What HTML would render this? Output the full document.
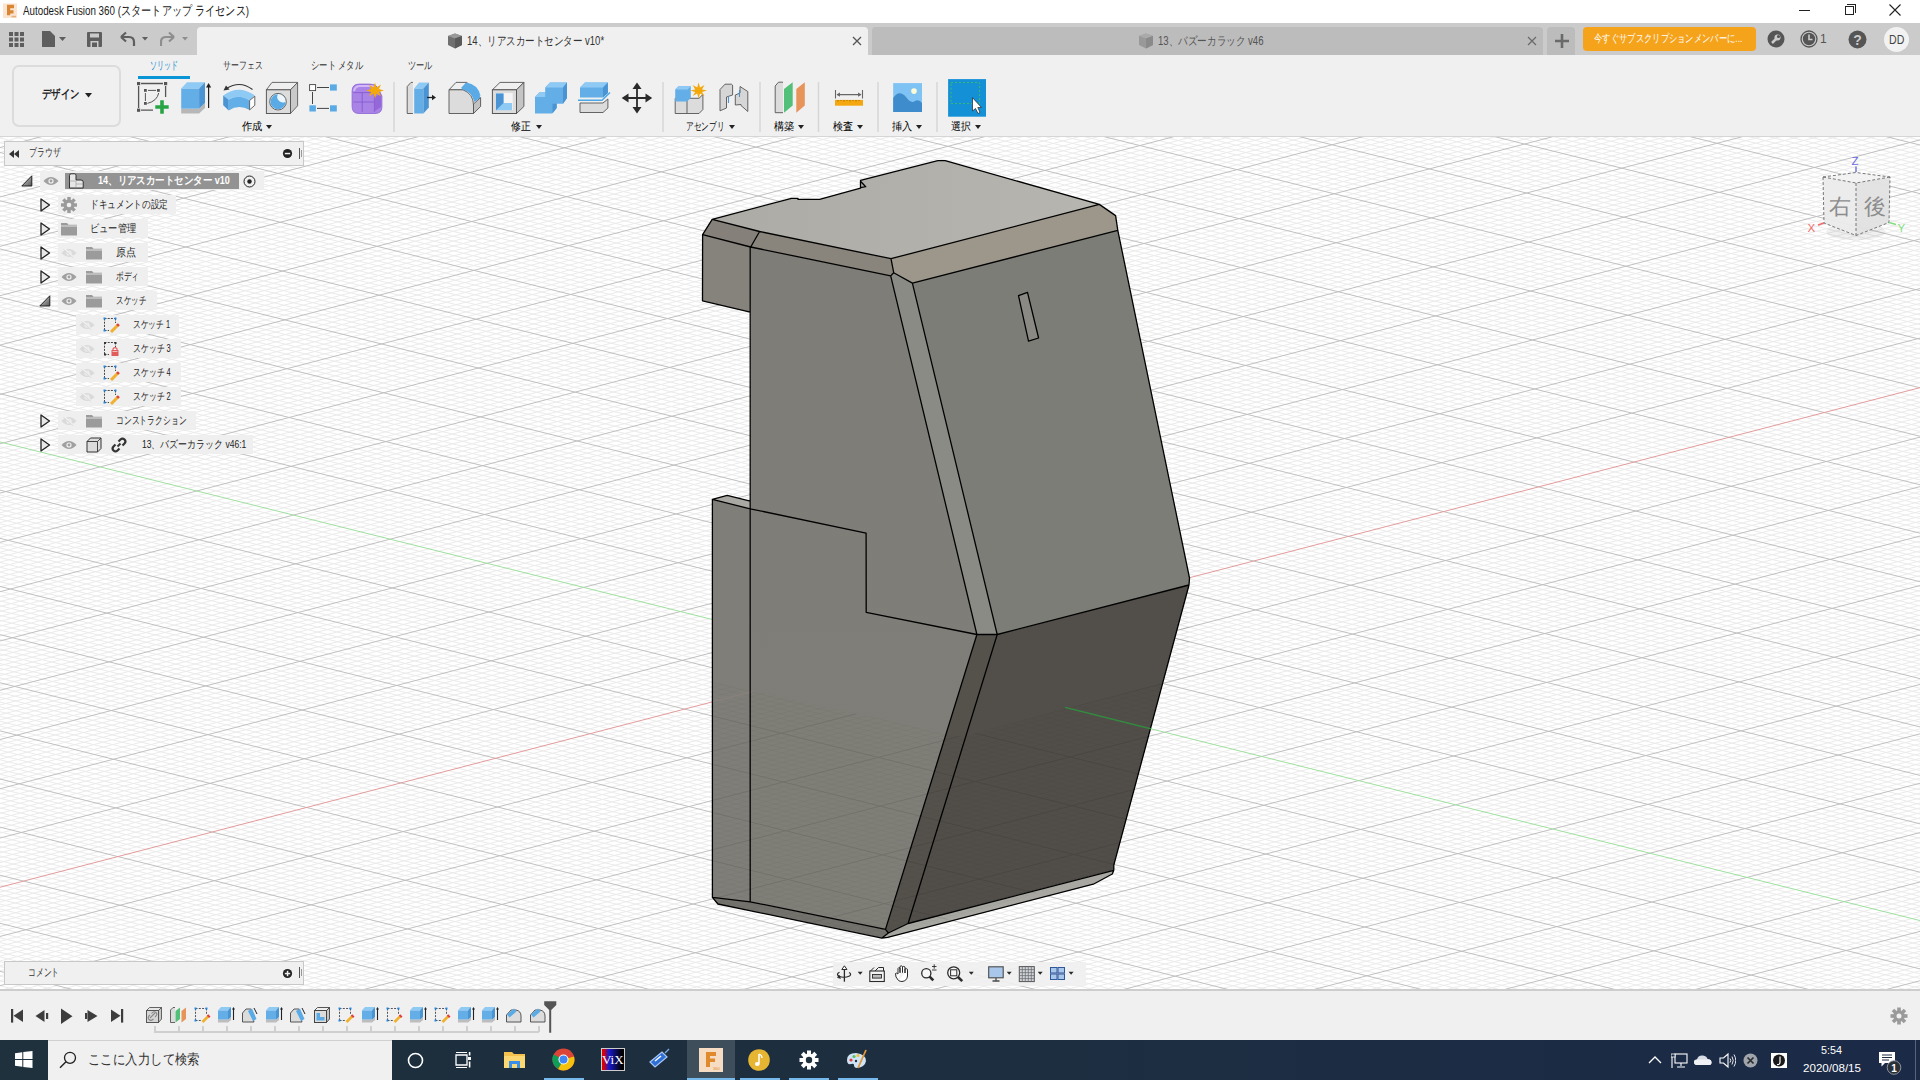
<!DOCTYPE html>
<html lang="ja">
<head>
<meta charset="utf-8">
<style>
*{margin:0;padding:0;box-sizing:border-box}
html,body{width:1920px;height:1080px;overflow:hidden;background:#fff;font-family:"Liberation Sans",sans-serif;color:#222}
.a{position:absolute}
.t{position:absolute;white-space:nowrap;line-height:1}
svg{display:block}
</style>
</head>
<body>
<!-- title bar -->
<div class="a" style="left:0;top:0;width:1920px;height:23px;background:#fff"></div>
<svg class="a" style="left:3px;top:3px" width="15" height="15" viewBox="0 0 15 15"><rect x="0" y="0.5" width="14" height="14.5" fill="#fbe4d0"/><path d="M4 1.8H11V5.2H7.2V7.3H10.5V10.5H7.2V12.2H4Z" fill="#d98634"/><rect x="8.5" y="12.8" width="4.5" height="1.5" fill="#e6b07a"/></svg>
<div class="t" style="left:23.0px;top:5px;font-size:12.5px;color:#1a1a1a;transform:scaleX(0.783);transform-origin:0 0">Autodesk Fusion 360 (スタートアップ ライセンス)</div>
<!-- window controls -->
<div class="a" style="left:1799px;top:10px;width:11px;height:1px;background:#222"></div>
<div class="a" style="left:1845px;top:6px;width:9px;height:9px;border:1px solid #222;background:#fff"></div>
<div class="a" style="left:1847px;top:4px;width:9px;height:9px;border-top:1px solid #222;border-right:1px solid #222"></div>
<svg class="a" style="left:1889px;top:4px" width="12" height="12"><path d="M0.5 0.5L11.5 11.5M11.5 0.5L0.5 11.5" stroke="#222" stroke-width="1.1"/></svg>

<!-- tab bar -->
<div class="a" style="left:0;top:23px;width:1920px;height:32px;background:#cbcbcb"></div>
<!-- left app buttons -->
<svg class="a" style="left:9px;top:32px" width="15" height="15"><g fill="#5e5e5e"><rect x="0" y="0" width="4" height="4"/><rect x="5.5" y="0" width="4" height="4"/><rect x="11" y="0" width="4" height="4"/><rect x="0" y="5.5" width="4" height="4"/><rect x="5.5" y="5.5" width="4" height="4"/><rect x="11" y="5.5" width="4" height="4"/><rect x="0" y="11" width="4" height="4"/><rect x="5.5" y="11" width="4" height="4"/><rect x="11" y="11" width="4" height="4"/></g></svg>
<svg class="a" style="left:42px;top:31px" width="28" height="17"><path d="M0 0 H8 L13 5 V16 H0 Z" fill="#5e5e5e"/><path d="M17 6 H24 L20.5 10 Z" fill="#5e5e5e"/></svg>
<svg class="a" style="left:87px;top:32px" width="15" height="15"><path d="M0 1 Q0 0 1 0 H14 Q15 0 15 1 V14 Q15 15 14 15 H1 Q0 15 0 14 Z" fill="#5e5e5e"/><rect x="3" y="1.5" width="9" height="4" fill="#cbcbcb"/><rect x="3.5" y="9" width="8" height="6" fill="#cbcbcb"/><rect x="5" y="10.5" width="5" height="4.5" fill="#5e5e5e"/></svg>
<svg class="a" style="left:118px;top:31px" width="34" height="17"><path d="M3 6 L8 1.5 M3 6 L8 10.5 M3 6 H11 Q16 6 16 11 V15" stroke="#5e5e5e" stroke-width="2.2" fill="none"/><path d="M24 6 H30 L27 9.5 Z" fill="#5e5e5e"/></svg>
<svg class="a" style="left:160px;top:31px" width="34" height="17"><path d="M14 6 L9 1.5 M14 6 L9 10.5 M14 6 H6 Q1 6 1 11 V15" stroke="#8e8e8e" stroke-width="2.2" fill="none"/><path d="M22 6 H28 L25 9.5 Z" fill="#8e8e8e"/></svg>

<!-- active tab -->
<div class="a" style="left:197px;top:27px;width:671px;height:28px;background:#f0f0f0;border-radius:4px 4px 0 0"></div>
<svg class="a" style="left:447px;top:33px" width="16" height="16"><path d="M1 3 L8 0.5 L15 3 V12 L8 15.5 L1 12 Z" fill="#707070"/><path d="M1 3 L8 5.5 L15 3 L8 0.5Z" fill="#9a9a9a"/><path d="M8 5.5 V15.5 L15 12 V3 Z" fill="#5a5a5a"/></svg>
<div class="t" style="left:467.2px;top:35px;font-size:12px;color:#333;transform:scaleX(0.794);transform-origin:0 0">14、リアスカートセンター v10*</div>
<svg class="a" style="left:852px;top:36px" width="10" height="10"><path d="M1 1L9 9M9 1L1 9" stroke="#555" stroke-width="1.3"/></svg>
<!-- inactive tab -->
<div class="a" style="left:872px;top:27px;width:671px;height:28px;background:#bcbcbc;border-radius:4px 4px 0 0"></div>
<svg class="a" style="left:1138px;top:33px" width="16" height="16"><path d="M1 3 L8 0.5 L15 3 V12 L8 15.5 L1 12 Z" fill="#999"/><path d="M1 3 L8 5.5 L15 3 L8 0.5Z" fill="#aaa"/><path d="M8 5.5 V15.5 L15 12 V3 Z" fill="#8a8a8a"/></svg>
<div class="t" style="left:1158.0px;top:35px;font-size:12px;color:#555;transform:scaleX(0.799);transform-origin:0 0">13、バズーカラック v46</div>
<svg class="a" style="left:1527px;top:36px" width="10" height="10"><path d="M1 1L9 9M9 1L1 9" stroke="#6a6a6a" stroke-width="1.2"/></svg>
<!-- plus tab -->
<div class="a" style="left:1547px;top:27px;width:28px;height:28px;background:#bcbcbc;border-radius:4px 4px 0 0"></div>
<svg class="a" style="left:1555px;top:34px" width="14" height="14"><path d="M7 0V14M0 7H14" stroke="#6a6a6a" stroke-width="2.6"/></svg>
<!-- orange button -->
<div class="a" style="left:1583px;top:27px;width:173px;height:24px;background:#f6a31c;border-radius:4px"></div>
<div class="t" style="left:1594.0px;top:33px;font-size:11px;color:#fff;transform:scaleX(0.756);transform-origin:0 0">今すぐサブスクリプションメンバーに...</div>
<!-- right icons -->
<svg class="a" style="left:1766px;top:29px" width="20" height="20"><circle cx="10" cy="10" r="8.5" fill="#555"/><path d="M6 14 L10 10" stroke="#cbcbcb" stroke-width="2.5"/><circle cx="11.5" cy="8.5" r="3" fill="#cbcbcb"/><circle cx="12.5" cy="7.5" r="1.6" fill="#555"/></svg>
<svg class="a" style="left:1799px;top:29px" width="20" height="20"><circle cx="10" cy="10" r="8" fill="none" stroke="#555" stroke-width="1.3"/><circle cx="10" cy="10" r="6.2" fill="#555"/><path d="M10 5.5 V10.5 H13.5" stroke="#cbcbcb" stroke-width="1.6" fill="none"/></svg>
<div class="t" style="left:1820px;top:33px;font-size:12px;color:#555">1</div>
<svg class="a" style="left:1848px;top:30px" width="19" height="19"><circle cx="9.5" cy="9.5" r="9" fill="#555"/><text x="9.5" y="14.5" text-anchor="middle" font-size="14" font-weight="bold" fill="#cbcbcb" font-family="Liberation Sans">?</text></svg>
<div class="a" style="left:1884px;top:27px;width:25px;height:25px;border-radius:50%;background:#f2f2f2"></div>
<div class="t" style="left:1889.4px;top:34px;font-size:12.5px;color:#444;transform:scaleX(0.847);transform-origin:0 0">DD</div>

<!-- toolbar -->
<div class="a" style="left:0;top:55px;width:1920px;height:82px;background:#f0f0f0;border-bottom:1px solid #d6d6d6"></div>
<div class="a" style="left:12px;top:65px;width:109px;height:62px;border:2px solid #dcdcdc;border-radius:7px"></div>
<div class="t" style="left:41.7px;top:89px;font-size:11.5px;font-weight:bold;color:#222;transform:scaleX(0.781);transform-origin:0 0">デザイン</div>
<svg class="a" style="left:85px;top:93px" width="7" height="5"><path d="M0 0H7L3.5 4.5Z" fill="#222"/></svg>
<div class="t" style="left:149.5px;top:60px;font-size:10.5px;color:#0b86cc;transform:scaleX(0.639);transform-origin:0 0">ソリッド</div>
<div class="a" style="left:138px;top:76px;width:52px;height:3px;background:#0a96d6"></div>
<div class="t" style="left:222.8px;top:60px;font-size:10.5px;color:#333;transform:scaleX(0.716);transform-origin:0 0">サーフェス</div>
<div class="t" style="left:310.7px;top:60px;font-size:10.5px;color:#333;transform:scaleX(0.756);transform-origin:0 0">シート メタル</div>
<div class="t" style="left:408.4px;top:60px;font-size:10.5px;color:#333;transform:scaleX(0.745);transform-origin:0 0">ツール</div>

<svg class="a" style="left:0;top:55px" width="1000" height="81" viewBox="0 55 1000 81">
<g stroke="#d6d6d6" stroke-width="1.5">
<path d="M394 82V132M663 82V132M760 82V132M818.5 82V132M878 82V132M937 82V132"/>
</g>
<!-- sketch -->
<g>
<path d="M141 83.5H163M138.6 86V108M141 110.2H153M165.6 86V97" stroke="#555" stroke-width="1.3" fill="none"/>
<rect x="137" y="82" width="3.2" height="3.2" fill="#555"/><rect x="164" y="82" width="3.2" height="3.2" fill="#555"/><rect x="137" y="108.6" width="3.2" height="3.2" fill="#555"/>
<rect x="144" y="89" width="2.8" height="2.8" fill="#555"/><rect x="157" y="89" width="2.8" height="2.8" fill="#555"/><rect x="144" y="102" width="2.8" height="2.8" fill="#555"/>
<path d="M148 90.4H156M145.4 93V101M147.5 103.4Q157 101 158.7 93" stroke="#555" stroke-width="1" fill="none"/>
<path d="M160.2 100.3H163.8V105.2H168.7V108.8H163.8V113.7H160.2V108.8H155.3V105.2H160.2Z" fill="#27a544"/>
</g>
<!-- extrude -->
<g>
<polygon points="181.2,108.6 199.1,108.6 205,103 205,108 199.1,113.5 181.2,113.5" fill="#b7b7b7"/>
<polygon points="181.2,88.4 199.1,88.4 199.1,108.6 181.2,108.6" fill="#64aee8"/>
<polygon points="181.2,88.4 187,82.2 205,82.2 199.1,88.4" fill="#8fcaf5"/>
<polygon points="199.1,88.4 205,82.2 205,103 199.1,108.6" fill="#4a94d4"/>
<path d="M208.6 108V86" stroke="#222" stroke-width="1.2"/><path d="M206 87.5L208.6 83L211.2 87.5Z" fill="#222"/>
</g>
<!-- revolve -->
<g>
<path d="M252.5 89.5Q240 80 226.5 88.5" stroke="#333" stroke-width="1.1" fill="none"/><path d="M223.5 90.5L226 85.5L229.5 89.5Z" fill="#333"/>
<path d="M223.2 95.6Q238.5 84 254.8 95.3L249.6 100.5Q238.5 93.5 228.7 99.8Z" fill="#8fcaf5"/>
<path d="M228.7 99.8Q238.5 93.5 249.6 100.5V109.9Q238.5 104 228.7 110.6Z" fill="#62aee8"/>
<path d="M223.2 95.6L228.7 99.8V110.6L223.2 105.3Z" fill="#4a94d4"/>
<path d="M249.6 100.5L254.8 96.2V105.3L249.6 109.9Z" fill="#fff" stroke="#555" stroke-width="0.9"/>
</g>
<!-- hole -->
<g>
<polygon points="266.4,89.8 272,82.4 297.6,82.4 290.5,89.8" fill="#efefef" stroke="#5a5a5a" stroke-width="0.9"/>
<polygon points="290.5,89.8 297.6,82.4 297.6,105.8 290.5,113.5" fill="#c9c9c9" stroke="#5a5a5a" stroke-width="0.9"/>
<rect x="266.4" y="89.8" width="24.1" height="23.7" fill="#dcdcdc" stroke="#5a5a5a" stroke-width="1"/>
<circle cx="278" cy="101.7" r="8.3" fill="#eef6fd" stroke="#555" stroke-width="0.9"/>
<path d="M278 94.2A7.5 7.5 0 1 0 285.5 101.7A5.5 5.5 0 0 1 278 94.2Z" fill="#5aaae6"/>
</g>
<!-- pattern -->
<g>
<rect x="309.6" y="84.6" width="6" height="6" fill="#fff" stroke="#444" stroke-width="0.9"/>
<rect x="330" y="84.4" width="6.8" height="6.2" fill="#5aaae6"/>
<rect x="309.4" y="105.3" width="6.5" height="6.2" fill="#5aaae6"/>
<rect x="330" y="105.3" width="6.8" height="6.2" fill="#5aaae6"/>
<path d="M317 87.5H329M317 108.4H329M312.5 92V104" stroke="#444" stroke-width="1"/>
</g>
<!-- form -->
<g>
<path d="M359 84.1H370Q376 84.1 378 88L381.9 96V107Q381.9 113.5 375 113.5H359Q352.1 113.5 352.1 106.5V91Q352.1 84.1 359 84.1Z" fill="#a983e6" stroke="#8c62d4" stroke-width="0.8"/>
<path d="M354 91Q355 86 360 86H371Q375 86 377 90" stroke="#d2b8fb" stroke-width="2.2" fill="none"/>
<path d="M353.4 92.6H374.4V111.9M362.2 92.6V111.9M353.4 102H374.4" stroke="#8358cc" stroke-width="0.8" fill="none"/>
<path d="M375 96.6L381 94V107L375 111Z" fill="#9468d8"/>
<polygon points="375,82.5 376.5,87.5 381,84.5 379,89 384,90.5 379,92 381,96.5 376.5,93.5 375,98.5 373.5,93.5 369,96.5 371,92 366,90.5 371,89 369,84.5 373.5,87.5" fill="#f3a80c"/>
</g>
<!-- press pull -->
<g>
<path d="M412.9 82.4H411L407.2 86.5V113.5H412.9" fill="#dcdcdc" stroke="#555" stroke-width="0.9"/>
<polygon points="414.2,88.4 423.4,88.4 423.4,113.5 414.2,113.5" fill="#64aee8"/>
<polygon points="414.2,88.4 419,82.4 428.8,82.4 423.4,88.4" fill="#8fcaf5"/>
<polygon points="423.4,88.4 428.8,82.4 428.8,107.5 423.4,113.5" fill="#4a94d4"/>
<path d="M427 97.5H433" stroke="#222" stroke-width="1.3"/><path d="M432 94.8L436 97.5L432 100.2Z" fill="#222"/>
</g>
<!-- fillet -->
<g>
<path d="M449 89.8L456 82.4H467L473.5 89.8Z" fill="#efefef" stroke="#555" stroke-width="0.9"/>
<path d="M449 89.8H463Q473.5 94 473.5 105V113.5H449Z" fill="#dcdcdc" stroke="#555" stroke-width="0.9"/>
<path d="M473.5 104L480.6 97.5V106.5L473.5 113.5Z" fill="#c2c2c2" stroke="#555" stroke-width="0.9"/>
<path d="M461.5 88Q478 86 480.5 97.5L474.5 102Q472 92 462.5 89.5Z" fill="#5aaae6"/>
<path d="M461 88L466 82.4Q478 84 480.6 96" fill="#5aaae6"/>
</g>
<!-- shell -->
<g>
<polygon points="492.4,89.8 500,82.4 523.9,82.4 516.5,89.8" fill="#efefef" stroke="#555" stroke-width="0.9"/>
<polygon points="516.5,89.8 523.9,82.4 523.9,106.5 516.5,113.5" fill="#c4c4c4" stroke="#555" stroke-width="0.9"/>
<rect x="492.4" y="89.8" width="24.1" height="23.7" fill="#dcdcdc" stroke="#555" stroke-width="1"/>
<rect x="496" y="93" width="16.7" height="17" fill="#f4f4f4"/>
<path d="M496 93.5H503.5V103H512V110.3H496Z" fill="#8fcaf5"/>
<path d="M496 93.5H503.5V103L496 110.3Z" fill="#4a94d4"/>
</g>
<!-- combine -->
<g>
<polygon points="545.2,87.5 550,82.4 567,82.4 567,98 563,103.7 545.2,103.7" fill="#64aee8"/>
<polygon points="545.2,87.5 550,82.4 567,82.4 563,87.5" fill="#8fcaf5"/>
<polygon points="563,87.5 567,82.4 567,98 563,103.7" fill="#4a94d4"/>
<polygon points="535,97 539.5,92.2 556.7,92.2 556.7,108 552,113.5 535,113.5" fill="#64aee8"/>
<polygon points="535,97 539.5,92.2 545.2,92.2 545.2,97" fill="#8fcaf5"/>
<polygon points="552.5,103.7 556.7,103.7 556.7,108 552.5,113.5" fill="#4a94d4"/>
</g>
<!-- split -->
<g>
<polygon points="580,87.5 585,82.4 607.9,82.4 607.9,93 603,97.6 580,97.6" fill="#64aee8"/>
<polygon points="580,87.5 585,82.4 607.9,82.4 603,87.5" fill="#8fcaf5"/>
<polygon points="603,87.5 607.9,82.4 607.9,93 603,97.6" fill="#4a94d4"/>
<path d="M578 100.3H602L610 92.5" stroke="#4aa8e6" stroke-width="1.4" fill="none"/>
<polygon points="580,103 603,103 607.9,99 607.9,108 603,112.5 580,112.5" fill="#dcdcdc" stroke="#555" stroke-width="0.9"/>
</g>
<!-- move -->
<g fill="#2a2a2a">
<path d="M637 84V112M623 98H651" stroke="#2a2a2a" stroke-width="1.8"/>
<polygon points="637,82.4 641.5,89 632.5,89"/><polygon points="637,113.5 641.5,107 632.5,107"/>
<polygon points="621.7,98 628.5,93.5 628.5,102.5"/><polygon points="652.2,98 645.5,93.5 645.5,102.5"/>
</g>
<!-- new component -->
<g>
<polygon points="675.2,98.3 699,98.3 702.9,94.5 702.9,109.5 699,113.5 675.2,113.5" fill="#dcdcdc" stroke="#555" stroke-width="0.9"/>
<path d="M687 98.3V113.5" stroke="#555" stroke-width="0.9"/>
<polygon points="675.2,89.5 678.5,86.2 690.8,86.2 690.8,98 687,101.4 675.2,101.4" fill="#64aee8"/>
<polygon points="675.2,89.5 678.5,86.2 690.8,86.2 687.5,89.5" fill="#8fcaf5"/>
<polygon points="698.6,82.5 700,87.5 704.5,85 702,89.5 707,90.5 702,92 704.5,96 700,93.5 698.6,98.5 697.2,93.5 692.7,96 695.2,92 690.2,90.5 695.2,89.5 692.7,85 697.2,87.5" fill="#f3a80c"/>
</g>
<!-- joint -->
<g fill="#d6d6d6" stroke="#555" stroke-width="0.9">
<path d="M720 89.5L725 84.2H731.5Q733 84.5 732.6 87V95L726.5 97V108L720 110.8Z"/>
<path d="M735.3 95L740 93V86.5L747.8 91.5V111.5L741 105.5V104.5L735.3 105Z"/>
<path d="M728.5 96.5V103M739.5 90V97" stroke="#4a94d4" stroke-width="1.1" fill="none"/>
</g>
<!-- plane -->
<g>
<path d="M783 82.2H778.5L775.2 86V112.7H783" fill="#dcdcdc" stroke="#555" stroke-width="0.9"/>
<polygon points="784,89 792.7,82.2 792.7,105.5 784,112.7" fill="#52c079"/>
<polygon points="796.3,89 804.8,82.2 804.8,105.5 796.3,112.7" fill="#e8935a"/>
</g>
<!-- measure -->
<g>
<rect x="835" y="99.9" width="28" height="5.8" fill="#f4a70e"/>
<path d="M838 100V101.5M841 100V101M844 100V101.5M847 100V101M850 100V101.5M853 100V101M856 100V101.5M859 100V101" stroke="#8a5a00" stroke-width="0.7"/>
<path d="M835.5 90V98.5M862.5 90V98.5M837 94.6H861" stroke="#666" stroke-width="1.1"/>
<path d="M836.5 94.6L840 92.5V96.7Z M861.5 94.6L858 92.5V96.7Z" fill="#666"/>
</g>
<!-- image -->
<g>
<rect x="893.2" y="83.1" width="28.8" height="28.8" fill="#7ec3f4"/>
<path d="M893.2 111.9V98Q899 89 906 97Q911 104 915 101Q919 99 922 103V111.9Z" fill="#3f8ccc"/>
<circle cx="914" cy="91.1" r="2.8" fill="#fffbd6"/>
</g>
<!-- select -->
<g>
<rect x="948.1" y="79.1" width="37.9" height="37.6" fill="#1390d6"/>
<rect x="951" y="82.6" width="28.6" height="21" fill="none" stroke="#3fbf6a" stroke-width="0.9" stroke-dasharray="2.2,1.8"/>
<path d="M972.5 97.7V111L975.5 108.5L978 113.5L980 112.5L977.8 107.5L981.5 107.5Z" fill="#fff" stroke="#222" stroke-width="0.7"/>
</g>
</svg>
<div class="t" style="left:241.8px;top:121px;font-size:10.5px;color:#000;transform:scaleX(0.927);transform-origin:0 0">作成</div>
<svg class="a" style="left:266px;top:125px" width="6" height="4"><path d="M0 0H6L3 4Z" fill="#222"/></svg>
<div class="t" style="left:511.0px;top:121px;font-size:10.5px;color:#000;transform:scaleX(0.895);transform-origin:0 0">修正</div>
<svg class="a" style="left:536px;top:125px" width="6" height="4"><path d="M0 0H6L3 4Z" fill="#222"/></svg>
<div class="t" style="left:686.2px;top:121px;font-size:10.5px;color:#000;transform:scaleX(0.698);transform-origin:0 0">アセンブリ</div>
<svg class="a" style="left:729px;top:125px" width="6" height="4"><path d="M0 0H6L3 4Z" fill="#222"/></svg>
<div class="t" style="left:774.2px;top:121px;font-size:10.5px;color:#000;transform:scaleX(0.927);transform-origin:0 0">構築</div>
<svg class="a" style="left:798px;top:125px" width="6" height="4"><path d="M0 0H6L3 4Z" fill="#222"/></svg>
<div class="t" style="left:833.0px;top:121px;font-size:10.5px;color:#000;transform:scaleX(0.923);transform-origin:0 0">検査</div>
<svg class="a" style="left:857px;top:125px" width="6" height="4"><path d="M0 0H6L3 4Z" fill="#222"/></svg>
<div class="t" style="left:891.9px;top:121px;font-size:10.5px;color:#000;transform:scaleX(0.923);transform-origin:0 0">挿入</div>
<svg class="a" style="left:916px;top:125px" width="6" height="4"><path d="M0 0H6L3 4Z" fill="#222"/></svg>
<div class="t" style="left:950.8px;top:121px;font-size:10.5px;color:#000;transform:scaleX(0.905);transform-origin:0 0">選択</div>
<svg class="a" style="left:975px;top:125px" width="6" height="4"><path d="M0 0H6L3 4Z" fill="#222"/></svg>


<!-- viewport -->
<svg width="1920" height="853" viewBox="0 137 1920 853" style="position:absolute;left:0;top:137px">
<defs>
<linearGradient id="gtop" x1="0" y1="0" x2="1" y2="0"><stop offset="0" stop-color="#acaba5"/><stop offset="1" stop-color="#b6b5b0"/></linearGradient>
<linearGradient id="gleft" x1="0" y1="0" x2="0" y2="1"><stop offset="0" stop-color="#7e7d77"/><stop offset="1" stop-color="#7f7e78"/></linearGradient>
</defs>
<rect x="0" y="137" width="1920" height="853" fill="#ffffff"/>
<path d="M3949.6 555.7L923.7 -194.2M3940.0 558.2L914.2 -191.7M3930.3 560.7L904.7 -189.2M3920.7 563.2L895.2 -186.7M3911.0 565.6L885.7 -184.2M3901.4 568.1L876.2 -181.7M3891.8 570.6L866.7 -179.2M3882.1 573.1L857.2 -176.7M3872.5 575.6L847.7 -174.2M3853.2 580.6L828.7 -169.2M3843.6 583.1L819.2 -166.7M3834.0 585.5L809.7 -164.2M3824.3 588.0L800.2 -161.7M3814.7 590.5L790.7 -159.2M3805.1 593.0L781.2 -156.7M3795.4 595.5L771.7 -154.2M3785.8 598.0L762.2 -151.7M3776.2 600.5L752.7 -149.2M3756.9 605.4L733.8 -144.3M3747.3 607.9L724.3 -141.8M3737.6 610.4L714.8 -139.3M3728.0 612.9L705.3 -136.8M3718.4 615.4L695.8 -134.3M3708.8 617.8L686.3 -131.8M3699.1 620.3L676.8 -129.3M3689.5 622.8L667.3 -126.8M3679.9 625.3L657.9 -124.3M3660.6 630.3L638.9 -119.3M3651.0 632.7L629.4 -116.8M3641.4 635.2L619.9 -114.3M3631.8 637.7L610.4 -111.8M3622.1 640.2L601.0 -109.3M3612.5 642.7L591.5 -106.9M3602.9 645.2L582.0 -104.4M3593.3 647.6L572.5 -101.9M3583.7 650.1L563.0 -99.4M3564.4 655.1L544.1 -94.4M3554.8 657.6L534.6 -91.9M3545.2 660.0L525.1 -89.4M3535.6 662.5L515.7 -86.9M3526.0 665.0L506.2 -84.4M3516.3 667.5L496.7 -81.9M3506.7 670.0L487.2 -79.5M3497.1 672.5L477.8 -77.0M3487.5 674.9L468.3 -74.5M3468.3 679.9L449.3 -69.5M3458.7 682.4L439.9 -67.0M3449.0 684.9L430.4 -64.5M3439.4 687.3L420.9 -62.0M3429.8 689.8L411.4 -59.5M3420.2 692.3L402.0 -57.0M3410.6 694.8L392.5 -54.6M3401.0 697.3L383.0 -52.1M3391.4 699.7L373.6 -49.6M3372.2 704.7L354.6 -44.6M3362.6 707.2L345.2 -42.1M3353.0 709.6L335.7 -39.6M3343.4 712.1L326.2 -37.1M3333.8 714.6L316.8 -34.6M3324.1 717.1L307.3 -32.2M3314.5 719.6L297.8 -29.7M3304.9 722.0L288.4 -27.2M3295.3 724.5L278.9 -24.7M3276.1 729.5L260.0 -19.7M3266.5 731.9L250.5 -17.2M3256.9 734.4L241.1 -14.7M3247.3 736.9L231.6 -12.3M3237.7 739.4L222.2 -9.8M3228.1 741.9L212.7 -7.3M3218.5 744.3L203.2 -4.8M3208.9 746.8L193.8 -2.3M3199.4 749.3L184.3 0.2M3180.2 754.2L165.4 5.1M3170.6 756.7L156.0 7.6M3161.0 759.2L146.5 10.1M3151.4 761.7L137.1 12.6M3141.8 764.1L127.6 15.1M3132.2 766.6L118.1 17.6M3122.6 769.1L108.7 20.1M3113.0 771.6L99.2 22.5M3103.4 774.0L89.8 25.0M3084.2 779.0L70.9 30.0M3074.7 781.5L61.4 32.5M3065.1 783.9L52.0 35.0M3055.5 786.4L42.5 37.4M3045.9 788.9L33.1 39.9M3036.3 791.4L23.6 42.4M3026.7 793.8L14.2 44.9M3017.1 796.3L4.8 47.4M3007.5 798.8L-4.7 49.9M2988.4 803.7L-23.6 54.8M2978.8 806.2L-33.0 57.3M2969.2 808.7L-42.5 59.8M2959.6 811.1L-51.9 62.3M2950.0 813.6L-61.4 64.8M2940.5 816.1L-70.8 67.2M2930.9 818.6L-80.2 69.7M2921.3 821.0L-89.7 72.2M2911.7 823.5L-99.1 74.7M2892.6 828.4L-118.0 79.6M2883.0 830.9L-127.4 82.1M2873.4 833.4L-136.9 84.6M2863.8 835.9L-146.3 87.1M2854.3 838.3L-155.7 89.6M2844.7 840.8L-165.2 92.0M2835.1 843.3L-174.6 94.5M2825.5 845.7L-184.0 97.0M2816.0 848.2L-193.5 99.5M2796.8 853.1L-212.3 104.4M2787.3 855.6L-221.8 106.9M2777.7 858.1L-231.2 109.4M2768.1 860.6L-240.6 111.9M2758.5 863.0L-250.1 114.4M2749.0 865.5L-259.5 116.8M2739.4 868.0L-268.9 119.3M2729.8 870.4L-278.4 121.8M2720.3 872.9L-287.8 124.3M2701.1 877.8L-306.6 129.2M2691.6 880.3L-316.1 131.7M2682.0 882.8L-325.5 134.2M2672.4 885.2L-334.9 136.7M2662.9 887.7L-344.3 139.1M2653.3 890.2L-353.8 141.6M2643.8 892.6L-363.2 144.1M2634.2 895.1L-372.6 146.6M2624.6 897.6L-382.0 149.1M2605.5 902.5L-400.9 154.0M2595.9 905.0L-410.3 156.5M2586.4 907.4L-419.7 159.0M2576.8 909.9L-429.1 161.4M2567.3 912.4L-438.6 163.9M2557.7 914.8L-448.0 166.4M2548.2 917.3L-457.4 168.9M2538.6 919.8L-466.8 171.3M2529.0 922.2L-476.2 173.8M2509.9 927.2L-495.1 178.8M2500.4 929.6L-504.5 181.2M2490.8 932.1L-513.9 183.7M2481.3 934.6L-523.3 186.2M2471.7 937.0L-532.7 188.7M2462.2 939.5L-542.1 191.1M2452.6 942.0L-551.6 193.6M2443.1 944.4L-561.0 196.1M2433.5 946.9L-570.4 198.6M2414.4 951.8L-589.2 203.5M2404.9 954.3L-598.6 206.0M2395.3 956.7L-608.0 208.5M2385.8 959.2L-617.4 210.9M2376.2 961.7L-626.8 213.4M2366.7 964.1L-636.2 215.9M2357.1 966.6L-645.7 218.4M2347.6 969.1L-655.1 220.8M2338.0 971.5L-664.5 223.3M2319.0 976.4L-683.3 228.2M2309.4 978.9L-692.7 230.7M2299.9 981.4L-702.1 233.2M2290.3 983.8L-711.5 235.7M2280.8 986.3L-720.9 238.1M2271.3 988.8L-730.3 240.6M2261.7 991.2L-739.7 243.1M2252.2 993.7L-749.1 245.5M2242.6 996.1L-758.5 248.0M2223.6 1001.1L-777.3 253.0M2214.0 1003.5L-786.7 255.4M2204.5 1006.0L-796.1 257.9M2194.9 1008.4L-805.5 260.4M2185.4 1010.9L-814.9 262.8M2175.9 1013.4L-824.3 265.3M2166.3 1015.8L-833.7 267.8M2156.8 1018.3L-843.1 270.2M2147.3 1020.7L-852.5 272.7M2128.2 1025.7L-871.3 277.7M2118.7 1028.1L-880.6 280.1M2109.2 1030.6L-890.0 282.6M2099.6 1033.0L-899.4 285.1M2090.1 1035.5L-908.8 287.5M2080.6 1038.0L-918.2 290.0M2071.0 1040.4L-927.6 292.5M2061.5 1042.9L-937.0 294.9M2052.0 1045.3L-946.4 297.4M2032.9 1050.2L-965.2 302.3M2023.4 1052.7L-974.5 304.8M2013.9 1055.2L-983.9 307.3M2004.4 1057.6L-993.3 309.7M1994.8 1060.1L-1002.7 312.2M1985.3 1062.5L-1012.1 314.7M1975.8 1065.0L-1021.5 317.1M1966.3 1067.4L-1030.9 319.6M1956.7 1069.9L-1040.2 322.1M1937.7 1074.8L-1059.0 327.0M1928.2 1077.3L-1068.4 329.5M1918.7 1079.7L-1077.8 331.9M1909.1 1082.2L-1087.1 334.4M1899.6 1084.6L-1096.5 336.9M1890.1 1087.1L-1105.9 339.3M1880.6 1089.6L-1115.3 341.8M1871.1 1092.0L-1124.7 344.3M1861.6 1094.5L-1134.0 346.7M1842.5 1099.4L-1152.8 351.7M1833.0 1101.8L-1162.2 354.1M1823.5 1104.3L-1171.5 356.6M1814.0 1106.7L-1180.9 359.1M1804.5 1109.2L-1190.3 361.5M1795.0 1111.6L-1199.7 364.0M1785.5 1114.1L-1209.0 366.5M1775.9 1116.6L-1218.4 368.9M1766.4 1119.0L-1227.8 371.4M1747.4 1123.9L-1246.5 376.3M1737.9 1126.4L-1255.9 378.8M1728.4 1128.8L-1265.3 381.2M1718.9 1131.3L-1274.6 383.7M1709.4 1133.7L-1284.0 386.2M1699.9 1136.2L-1293.4 388.6M1690.4 1138.6L-1302.7 391.1M1680.9 1141.1L-1312.1 393.5M1671.4 1143.5L-1321.5 396.0M1652.4 1148.4L-1340.2 400.9M1642.9 1150.9L-1349.6 403.4M1633.4 1153.3L-1358.9 405.9M1623.8 1155.8L-1368.3 408.3M1614.3 1158.3L-1377.7 410.8M1604.8 1160.7L-1387.0 413.2M1595.3 1163.2L-1396.4 415.7M1585.8 1165.6L-1405.8 418.2M1576.3 1168.1L-1415.1 420.6M1557.4 1173.0L-1433.8 425.5M1547.9 1175.4L-1443.2 428.0M1538.4 1177.9L-1452.6 430.5M1528.9 1180.3L-1461.9 432.9M1519.4 1182.8L-1471.3 435.4M1509.9 1185.2L-1480.6 437.8M1500.4 1187.7L-1490.0 440.3M1490.9 1190.1L-1499.3 442.8M1481.4 1192.6L-1508.7 445.2M1462.4 1197.5L-1527.4 450.1M1452.9 1199.9L-1536.8 452.6M1443.4 1202.4L-1546.1 455.1M1433.9 1204.8L-1555.5 457.5M1424.4 1207.3L-1564.8 460.0M1415.0 1209.7L-1574.2 462.4M1405.5 1212.1L-1583.5 464.9M1396.0 1214.6L-1592.9 467.3M1386.5 1217.0L-1602.2 469.8M1367.5 1221.9L-1620.9 474.7M1358.0 1224.4L-1630.3 477.2M1348.6 1226.8L-1639.6 479.6M1339.1 1229.3L-1649.0 482.1M1329.6 1231.7L-1658.3 484.5M1320.1 1234.2L-1667.6 487.0M1310.6 1236.6L-1677.0 489.5M1301.1 1239.1L-1686.3 491.9M1291.7 1241.5L-1695.7 494.4M1272.7 1246.4L-1714.4 499.3M1263.2 1248.9L-1723.7 501.7M1253.7 1251.3L-1733.1 504.2M1244.3 1253.7L-1742.4 506.7M1234.8 1256.2L-1751.7 509.1M1225.3 1258.6L-1761.1 511.6M1215.8 1261.1L-1770.4 514.0M1206.3 1263.5L-1779.8 516.5M1196.9 1266.0L-1789.1 518.9M1177.9 1270.9L-1807.8 523.8M1168.4 1273.3L-1817.1 526.3M1159.0 1275.7L-1826.4 528.7M1149.5 1278.2L-1835.8 531.2M1140.0 1280.6L-1845.1 533.7M1130.6 1283.1L-1854.5 536.1M1121.1 1285.5L-1863.8 538.6M1111.6 1288.0L-1873.1 541.0M1102.1 1290.4L-1882.5 543.5M1083.2 1295.3L-1901.1 548.4M1073.7 1297.7L-1910.4 550.8M1064.3 1300.2L-1919.8 553.3M1054.8 1302.6L-1929.1 555.7M1045.3 1305.1L-1938.4 558.2M1035.9 1307.5L-1947.8 560.6M1026.4 1310.0L-1957.1 563.1M1016.9 1312.4L-1966.4 565.5M1007.5 1314.8L-1975.8 568.0M3949.4 550.8L988.3 1314.9M3939.6 548.3L978.7 1312.4M3929.8 545.9L969.0 1310.0M3920.0 543.5L959.3 1307.6M3910.2 541.1L949.7 1305.2M3900.4 538.6L940.0 1302.8M3890.6 536.2L930.3 1300.3M3880.8 533.8L920.6 1297.9M3871.0 531.3L911.0 1295.5M3851.3 526.5L891.6 1290.7M3841.5 524.0L882.0 1288.2M3831.7 521.6L872.3 1285.8M3821.9 519.2L862.6 1283.4M3812.1 516.7L853.0 1281.0M3802.3 514.3L843.3 1278.5M3792.5 511.9L833.6 1276.1M3782.7 509.5L824.0 1273.7M3772.9 507.0L814.3 1271.3M3753.3 502.2L795.0 1266.4M3743.5 499.7L785.3 1264.0M3733.7 497.3L775.6 1261.6M3723.9 494.9L766.0 1259.2M3714.1 492.5L756.3 1256.8M3704.3 490.0L746.6 1254.4M3694.4 487.6L737.0 1251.9M3684.6 485.2L727.3 1249.5M3674.8 482.7L717.7 1247.1M3655.2 477.9L698.3 1242.3M3645.4 475.4L688.7 1239.8M3635.6 473.0L679.0 1237.4M3625.8 470.6L669.3 1235.0M3616.0 468.2L659.7 1232.6M3606.2 465.7L650.0 1230.2M3596.4 463.3L640.4 1227.7M3586.6 460.9L630.7 1225.3M3576.8 458.4L621.0 1222.9M3557.2 453.6L601.7 1218.1M3547.4 451.2L592.1 1215.7M3537.6 448.7L582.4 1213.2M3527.8 446.3L572.8 1210.8M3518.0 443.9L563.1 1208.4M3508.3 441.5L553.4 1206.0M3498.5 439.0L543.8 1203.6M3488.7 436.6L534.1 1201.1M3478.9 434.2L524.5 1198.7M3459.3 429.3L505.2 1193.9M3449.5 426.9L495.5 1191.5M3439.7 424.5L485.8 1189.1M3429.9 422.0L476.2 1186.6M3420.1 419.6L466.5 1184.2M3410.3 417.2L456.9 1181.8M3400.5 414.7L447.2 1179.4M3390.7 412.3L437.6 1177.0M3380.9 409.9L427.9 1174.6M3361.3 405.0L408.6 1169.7M3351.5 402.6L399.0 1167.3M3341.8 400.2L389.3 1164.9M3332.0 397.8L379.7 1162.5M3322.2 395.3L370.0 1160.1M3312.4 392.9L360.4 1157.6M3302.6 390.5L350.7 1155.2M3292.8 388.1L341.1 1152.8M3283.0 385.6L331.4 1150.4M3263.4 380.8L312.1 1145.6M3253.6 378.4L302.5 1143.1M3243.9 375.9L292.8 1140.7M3234.1 373.5L283.2 1138.3M3224.3 371.1L273.5 1135.9M3214.5 368.7L263.9 1133.5M3204.7 366.2L254.2 1131.1M3194.9 363.8L244.6 1128.7M3185.1 361.4L234.9 1126.2M3165.6 356.5L215.6 1121.4M3155.8 354.1L206.0 1119.0M3146.0 351.7L196.3 1116.6M3136.2 349.3L186.7 1114.2M3126.4 346.8L177.0 1111.7M3116.6 344.4L167.4 1109.3M3106.9 342.0L157.8 1106.9M3097.1 339.6L148.1 1104.5M3087.3 337.1L138.5 1102.1M3067.7 332.3L119.2 1097.3M3057.9 329.9L109.5 1094.8M3048.2 327.4L99.9 1092.4M3038.4 325.0L90.3 1090.0M3028.6 322.6L80.6 1087.6M3018.8 320.2L71.0 1085.2M3009.0 317.7L61.3 1082.8M2999.3 315.3L51.7 1080.4M2989.5 312.9L42.0 1078.0M2969.9 308.0L22.8 1073.1M2960.1 305.6L13.1 1070.7M2950.4 303.2L3.5 1068.3M2940.6 300.8L-6.2 1065.9M2930.8 298.4L-15.8 1063.5M2921.0 295.9L-25.4 1061.1M2911.2 293.5L-35.1 1058.6M2901.5 291.1L-44.7 1056.2M2891.7 288.7L-54.3 1053.8M2872.1 283.8L-73.6 1049.0M2862.4 281.4L-83.3 1046.6M2852.6 279.0L-92.9 1044.2M2842.8 276.6L-102.5 1041.8M2833.0 274.1L-112.2 1039.3M2823.3 271.7L-121.8 1036.9M2813.5 269.3L-131.4 1034.5M2803.7 266.9L-141.1 1032.1M2793.9 264.4L-150.7 1029.7M2774.4 259.6L-170.0 1024.9M2764.6 257.2L-179.6 1022.5M2754.9 254.8L-189.2 1020.0M2745.1 252.3L-198.9 1017.6M2735.3 249.9L-208.5 1015.2M2725.5 247.5L-218.1 1012.8M2715.8 245.1L-227.8 1010.4M2706.0 242.6L-237.4 1008.0M2696.2 240.2L-247.0 1005.6M2676.7 235.4L-266.3 1000.8M2666.9 233.0L-275.9 998.3M2657.2 230.5L-285.6 995.9M2647.4 228.1L-295.2 993.5M2637.6 225.7L-304.8 991.1M2627.8 223.3L-314.4 988.7M2618.1 220.9L-324.1 986.3M2608.3 218.4L-333.7 983.9M2598.5 216.0L-343.3 981.5M2579.0 211.2L-362.6 976.7M2569.2 208.8L-372.2 974.2M2559.5 206.3L-381.8 971.8M2549.7 203.9L-391.5 969.4M2540.0 201.5L-401.1 967.0M2530.2 199.1L-410.7 964.6M2520.4 196.7L-420.3 962.2M2510.7 194.2L-430.0 959.8M2500.9 191.8L-439.6 957.4M2481.4 187.0L-458.8 952.6M2471.6 184.6L-468.5 950.1M2461.8 182.1L-478.1 947.7M2452.1 179.7L-487.7 945.3M2442.3 177.3L-497.3 942.9M2432.6 174.9L-507.0 940.5M2422.8 172.5L-516.6 938.1M2413.0 170.0L-526.2 935.7M2403.3 167.6L-535.8 933.3M2383.8 162.8L-555.1 928.5M2374.0 160.4L-564.7 926.1M2364.2 158.0L-574.3 923.6M2354.5 155.5L-583.9 921.2M2344.7 153.1L-593.5 918.8M2335.0 150.7L-603.2 916.4M2325.2 148.3L-612.8 914.0M2315.5 145.9L-622.4 911.6M2305.7 143.4L-632.0 909.2M2286.2 138.6L-651.3 904.4M2276.4 136.2L-660.9 902.0M2266.7 133.8L-670.5 899.6M2256.9 131.4L-680.1 897.2M2247.2 128.9L-689.7 894.7M2237.4 126.5L-699.3 892.3M2227.6 124.1L-709.0 889.9M2217.9 121.7L-718.6 887.5M2208.1 119.3L-728.2 885.1M2188.6 114.4L-747.4 880.3M2178.9 112.0L-757.0 877.9M2169.1 109.6L-766.6 875.5M2159.4 107.2L-776.3 873.1M2149.6 104.8L-785.9 870.7M2139.9 102.4L-795.5 868.3M2130.1 99.9L-805.1 865.9M2120.4 97.5L-814.7 863.5M2110.6 95.1L-824.3 861.1M2091.1 90.3L-843.5 856.2M2081.4 87.9L-853.2 853.8M2071.6 85.4L-862.8 851.4M2061.9 83.0L-872.4 849.0M2052.1 80.6L-882.0 846.6M2042.4 78.2L-891.6 844.2M2032.6 75.8L-901.2 841.8M2022.9 73.4L-910.8 839.4M2013.1 70.9L-920.4 837.0M1993.6 66.1L-939.6 832.2M1983.9 63.7L-949.3 829.8M1974.1 61.3L-958.9 827.4M1964.4 58.9L-968.5 825.0M1954.7 56.5L-978.1 822.6M1944.9 54.0L-987.7 820.2M1935.2 51.6L-997.3 817.7M1925.4 49.2L-1006.9 815.3M1915.7 46.8L-1016.5 812.9M1896.2 42.0L-1035.7 808.1M1886.4 39.6L-1045.3 805.7M1876.7 37.1L-1054.9 803.3M1867.0 34.7L-1064.5 800.9M1857.2 32.3L-1074.1 798.5M1847.5 29.9L-1083.7 796.1M1837.7 27.5L-1093.3 793.7M1828.0 25.1L-1102.9 791.3M1818.2 22.7L-1112.5 788.9M1798.8 17.8L-1131.7 784.1M1789.0 15.4L-1141.3 781.7M1779.3 13.0L-1150.9 779.3M1769.5 10.6L-1160.6 776.9M1759.8 8.2L-1170.2 774.5M1750.1 5.8L-1179.8 772.1M1740.3 3.3L-1189.4 769.7M1730.6 0.9L-1199.0 767.3M1720.9 -1.5L-1208.6 764.9M1701.4 -6.3L-1227.8 760.0M1691.6 -8.7L-1237.3 757.6M1681.9 -11.1L-1246.9 755.2M1672.2 -13.5L-1256.5 752.8M1662.4 -16.0L-1266.1 750.4M1652.7 -18.4L-1275.7 748.0M1643.0 -20.8L-1285.3 745.6M1633.2 -23.2L-1294.9 743.2M1623.5 -25.6L-1304.5 740.8M1604.0 -30.4L-1323.7 736.0M1594.3 -32.8L-1333.3 733.6M1584.6 -35.3L-1342.9 731.2M1574.8 -37.7L-1352.5 728.8M1565.1 -40.1L-1362.1 726.4M1555.4 -42.5L-1371.7 724.0M1545.6 -44.9L-1381.3 721.6M1535.9 -47.3L-1390.9 719.2M1526.2 -49.7L-1400.5 716.8M1506.7 -54.5L-1419.7 712.0M1497.0 -57.0L-1429.3 709.6M1487.2 -59.4L-1438.8 707.2M1477.5 -61.8L-1448.4 704.8M1467.8 -64.2L-1458.0 702.4M1458.1 -66.6L-1467.6 700.0M1448.3 -69.0L-1477.2 697.6M1438.6 -71.4L-1486.8 695.2M1428.9 -73.8L-1496.4 692.8M1409.4 -78.7L-1515.6 688.0M1399.7 -81.1L-1525.2 685.6M1390.0 -83.5L-1534.8 683.2M1380.2 -85.9L-1544.3 680.8M1370.5 -88.3L-1553.9 678.4M1360.8 -90.7L-1563.5 676.0M1351.1 -93.1L-1573.1 673.6M1341.3 -95.5L-1582.7 671.2M1331.6 -97.9L-1592.3 668.8M1312.2 -102.8L-1611.5 664.0M1302.4 -105.2L-1621.0 661.6M1292.7 -107.6L-1630.6 659.2M1283.0 -110.0L-1640.2 656.8M1273.3 -112.4L-1649.8 654.4M1263.5 -114.8L-1659.4 652.0M1253.8 -117.2L-1669.0 649.6M1244.1 -119.6L-1678.5 647.2M1234.4 -122.0L-1688.1 644.8M1214.9 -126.9L-1707.3 640.0M1205.2 -129.3L-1716.9 637.6M1195.5 -131.7L-1726.5 635.2M1185.8 -134.1L-1736.0 632.8M1176.1 -136.5L-1745.6 630.4M1166.3 -138.9L-1755.2 628.0M1156.6 -141.3L-1764.8 625.6M1146.9 -143.7L-1774.4 623.2M1137.2 -146.1L-1784.0 620.8M1117.7 -150.9L-1803.1 616.0M1108.0 -153.3L-1812.7 613.6M1098.3 -155.8L-1822.3 611.2M1088.6 -158.2L-1831.9 608.8M1078.9 -160.6L-1841.4 606.4M1069.2 -163.0L-1851.0 604.0M1059.4 -165.4L-1860.6 601.6M1049.7 -167.8L-1870.2 599.2M1040.0 -170.2L-1879.7 596.8M1020.6 -175.0L-1898.9 592.0M1010.9 -177.4L-1908.5 589.6M1001.2 -179.8L-1918.1 587.2M991.4 -182.2L-1927.6 584.8M981.7 -184.6L-1937.2 582.4M972.0 -187.0L-1946.8 580.0M962.3 -189.5L-1956.4 577.6M952.6 -191.9L-1965.9 575.2M942.9 -194.3L-1975.5 572.8" stroke="#ebebeb" stroke-width="1.0" fill="none"/><path d="M3959.3 553.2L933.2 -196.7M3862.9 578.1L838.2 -171.7M3766.5 602.9L743.2 -146.8M3670.3 627.8L648.4 -121.8M3574.0 652.6L553.6 -96.9M3477.9 677.4L458.8 -72.0M3381.8 702.2L364.1 -47.1M3285.7 727.0L269.5 -22.2M3189.8 751.8L174.9 2.7M3093.8 776.5L80.3 27.5M2998.0 801.2L-14.1 52.3M2902.2 826.0L-108.6 77.2M2806.4 850.7L-202.9 102.0M2710.7 875.4L-297.2 126.8M2615.1 900.0L-391.5 151.5M2519.5 924.7L-485.7 176.3M2424.0 949.4L-579.8 201.0M2328.5 974.0L-673.9 225.8M2137.7 1023.2L-861.9 275.2M2042.5 1047.8L-955.8 299.9M1947.2 1072.4L-1049.6 324.5M1852.0 1096.9L-1143.4 349.2M1756.9 1121.5L-1237.2 373.8M1661.9 1146.0L-1330.8 398.5M1566.9 1170.5L-1424.5 423.1M1471.9 1195.0L-1518.0 447.7M1377.0 1219.5L-1611.6 472.3M1282.2 1244.0L-1705.0 496.8M1187.4 1268.4L-1798.4 521.4M1092.7 1292.9L-1891.8 545.9M998.0 1317.3L-1985.1 570.4M3959.3 553.2L998.0 1317.3M3861.1 528.9L901.3 1293.1M3763.1 504.6L804.6 1268.9M3665.0 480.3L708.0 1244.7M3567.0 456.0L611.4 1220.5M3469.1 431.7L514.8 1196.3M3371.1 407.5L418.3 1172.1M3273.2 383.2L321.8 1148.0M3175.3 359.0L225.3 1123.8M3077.5 334.7L128.8 1099.7M2979.7 310.5L32.4 1075.5M2881.9 286.2L-64.0 1051.4M2784.2 262.0L-160.3 1027.3M2686.5 237.8L-256.7 1003.2M2491.1 189.4L-449.2 955.0M2393.5 165.2L-545.4 930.9M2295.9 141.0L-641.6 906.8M2198.4 116.9L-737.8 882.7M2100.9 92.7L-833.9 858.6M2003.4 68.5L-930.0 834.6M1905.9 44.4L-1026.1 810.5M1808.5 20.2L-1122.1 786.5M1711.1 -3.9L-1218.2 762.5M1613.8 -28.0L-1314.1 738.4M1516.4 -52.1L-1410.1 714.4M1419.1 -76.2L-1506.0 690.4M1321.9 -100.3L-1601.9 666.4M1224.7 -124.4L-1697.7 642.4M1127.5 -148.5L-1793.5 618.4M1030.3 -172.6L-1889.3 594.4M933.2 -196.7L-1985.1 570.4" stroke="#c0c0c0" stroke-width="1.0" fill="none"/><path d="M2588.8 213.6L-353.0 979.1" stroke="#e39b9b" stroke-width="1" fill="none"/><path d="M2233.1 998.6L-767.9 250.5" stroke="#9fdf9f" stroke-width="1" fill="none"/>
<polygon points="712.2,219.3 791.5,198.4 798,198.4 798,199.4 819.6,199.4 860.5,188.2 860.5,180.4 937.8,160.7 945.2,160.7 1099.3,204.4 891,258.7 759.6,231.5" fill="url(#gtop)" /><polygon points="712.2,219.3 759.6,231.5 750.7,247 702.6,234.7" fill="#85817a" /><polygon points="759.6,231.5 891,258.7 893.7,272.7 890.7,275.9 750.7,247" fill="#89857c" /><polygon points="891,258.7 1099.3,204.4 1115.6,215.6 1117.8,230.4 912.4,283.1 893.7,272.7" fill="#9d978b" /><polygon points="702.6,234.7 750.7,247 750.2,312.2 702.5,300.8" fill="#86827c" /><polygon points="750.7,247 890.7,275.9 976.9,634.5 885.5,929.4 750.2,901.8" fill="url(#gleft)" /><polygon points="890.7,275.9 893.7,272.7 912.4,283.1 997.2,634.5 976.9,634.5" fill="#8b8b86" /><polygon points="912.4,283.1 1117.8,230.4 1189.5,578 1189,585 997.2,634.5" fill="#7d7d78" /><polygon points="976.9,634.5 997.2,634.5 908.1,923.5 888.4,933 885.5,929.4" fill="#55524c" /><polygon points="997.2,634.5 1189,585 1113.8,865.2 1113.8,870.3 908.1,923.5" fill="#524f4a" /><polygon points="908.1,923.5 1113.8,870.3 1112.3,874 1093.3,884.2 887.7,937.4 881.9,938.1 888.4,933" fill="#a8a7a2" /><polygon points="712.4,499.3 727.2,495.4 750.2,501.2 750.2,508.8" fill="#a9a8a3" /><polygon points="712.4,499.3 750.2,508.8 750.2,901.8 712.4,897.4" fill="#7f7e79" /><polygon points="712.4,897.4 750.2,901.8 885.5,929.4 888.4,933 881.9,938.1 717.9,904" fill="#74726d" /><polygon points="1018.5,295.6 1027.5,292.3 1038.6,338 1028.5,341.2" fill="#8a8984" /><path d="M712.2,219.3 L791.5,198.4 L798,198.4 L798,199.4 L819.6,199.4 L860.5,188.2 L860.5,180.4 L937.8,160.7 L945.2,160.7 L1099.3,204.4 L891,258.7 L759.6,231.5ZM712.2,219.3 L702.6,234.7 L702.5,300.8 L750.2,312.2M759.6,231.5 L750.7,247 L702.6,234.7M750.7,247 L890.7,275.9 L893.7,272.7 L891,258.7M1099.3,204.4 L1115.6,215.6 L1117.8,230.4 L912.4,283.1 L893.7,272.7M750.2,247 L750.2,901.8M890.7,275.9 L976.9,634.5 L885.5,929.4M912.4,283.1 L997.2,634.5 L908.1,923.5M976.9,634.5 L997.2,634.5 L1189,585M1117.8,230.4 L1189.5,578 L1189,585 L1113.8,865.2 L1113.8,870.3 L908.1,923.5 L888.4,933 L885.5,929.4 L750.2,901.8 L712.4,897.4 L712.4,499.3 L727.2,495.4 L750.2,501.2M712.4,499.3 L750.2,508.8 L866.1,533.2 L866.2,612.3 L976.9,634.5M1113.8,870.3 L1112.3,874 L1093.3,884.2 L887.7,937.4 L881.9,938.1 L717.9,904 L712.4,897.4M888.4,933 L881.9,938.1M1018.5,295.6 L1027.5,292.3 L1038.6,338 L1028.5,341.2ZM860.5,181.2 L865.7,186.7 L860.5,187.7" stroke="#000" stroke-width="1.3" fill="none" stroke-linejoin="round"/>
<clipPath id="lowclip"><polygon points="712.4,682 750,690 962,737 997,727 1189,676 1189,585 1113.8,870.3 887.7,937.4 881.9,938.1 717.9,904 712.4,897.4"/></clipPath>
<g clip-path="url(#lowclip)" opacity="0.1"><path d="M3949.6 555.7L923.7 -194.2M3940.0 558.2L914.2 -191.7M3930.3 560.7L904.7 -189.2M3920.7 563.2L895.2 -186.7M3911.0 565.6L885.7 -184.2M3901.4 568.1L876.2 -181.7M3891.8 570.6L866.7 -179.2M3882.1 573.1L857.2 -176.7M3872.5 575.6L847.7 -174.2M3853.2 580.6L828.7 -169.2M3843.6 583.1L819.2 -166.7M3834.0 585.5L809.7 -164.2M3824.3 588.0L800.2 -161.7M3814.7 590.5L790.7 -159.2M3805.1 593.0L781.2 -156.7M3795.4 595.5L771.7 -154.2M3785.8 598.0L762.2 -151.7M3776.2 600.5L752.7 -149.2M3756.9 605.4L733.8 -144.3M3747.3 607.9L724.3 -141.8M3737.6 610.4L714.8 -139.3M3728.0 612.9L705.3 -136.8M3718.4 615.4L695.8 -134.3M3708.8 617.8L686.3 -131.8M3699.1 620.3L676.8 -129.3M3689.5 622.8L667.3 -126.8M3679.9 625.3L657.9 -124.3M3660.6 630.3L638.9 -119.3M3651.0 632.7L629.4 -116.8M3641.4 635.2L619.9 -114.3M3631.8 637.7L610.4 -111.8M3622.1 640.2L601.0 -109.3M3612.5 642.7L591.5 -106.9M3602.9 645.2L582.0 -104.4M3593.3 647.6L572.5 -101.9M3583.7 650.1L563.0 -99.4M3564.4 655.1L544.1 -94.4M3554.8 657.6L534.6 -91.9M3545.2 660.0L525.1 -89.4M3535.6 662.5L515.7 -86.9M3526.0 665.0L506.2 -84.4M3516.3 667.5L496.7 -81.9M3506.7 670.0L487.2 -79.5M3497.1 672.5L477.8 -77.0M3487.5 674.9L468.3 -74.5M3468.3 679.9L449.3 -69.5M3458.7 682.4L439.9 -67.0M3449.0 684.9L430.4 -64.5M3439.4 687.3L420.9 -62.0M3429.8 689.8L411.4 -59.5M3420.2 692.3L402.0 -57.0M3410.6 694.8L392.5 -54.6M3401.0 697.3L383.0 -52.1M3391.4 699.7L373.6 -49.6M3372.2 704.7L354.6 -44.6M3362.6 707.2L345.2 -42.1M3353.0 709.6L335.7 -39.6M3343.4 712.1L326.2 -37.1M3333.8 714.6L316.8 -34.6M3324.1 717.1L307.3 -32.2M3314.5 719.6L297.8 -29.7M3304.9 722.0L288.4 -27.2M3295.3 724.5L278.9 -24.7M3276.1 729.5L260.0 -19.7M3266.5 731.9L250.5 -17.2M3256.9 734.4L241.1 -14.7M3247.3 736.9L231.6 -12.3M3237.7 739.4L222.2 -9.8M3228.1 741.9L212.7 -7.3M3218.5 744.3L203.2 -4.8M3208.9 746.8L193.8 -2.3M3199.4 749.3L184.3 0.2M3180.2 754.2L165.4 5.1M3170.6 756.7L156.0 7.6M3161.0 759.2L146.5 10.1M3151.4 761.7L137.1 12.6M3141.8 764.1L127.6 15.1M3132.2 766.6L118.1 17.6M3122.6 769.1L108.7 20.1M3113.0 771.6L99.2 22.5M3103.4 774.0L89.8 25.0M3084.2 779.0L70.9 30.0M3074.7 781.5L61.4 32.5M3065.1 783.9L52.0 35.0M3055.5 786.4L42.5 37.4M3045.9 788.9L33.1 39.9M3036.3 791.4L23.6 42.4M3026.7 793.8L14.2 44.9M3017.1 796.3L4.8 47.4M3007.5 798.8L-4.7 49.9M2988.4 803.7L-23.6 54.8M2978.8 806.2L-33.0 57.3M2969.2 808.7L-42.5 59.8M2959.6 811.1L-51.9 62.3M2950.0 813.6L-61.4 64.8M2940.5 816.1L-70.8 67.2M2930.9 818.6L-80.2 69.7M2921.3 821.0L-89.7 72.2M2911.7 823.5L-99.1 74.7M2892.6 828.4L-118.0 79.6M2883.0 830.9L-127.4 82.1M2873.4 833.4L-136.9 84.6M2863.8 835.9L-146.3 87.1M2854.3 838.3L-155.7 89.6M2844.7 840.8L-165.2 92.0M2835.1 843.3L-174.6 94.5M2825.5 845.7L-184.0 97.0M2816.0 848.2L-193.5 99.5M2796.8 853.1L-212.3 104.4M2787.3 855.6L-221.8 106.9M2777.7 858.1L-231.2 109.4M2768.1 860.6L-240.6 111.9M2758.5 863.0L-250.1 114.4M2749.0 865.5L-259.5 116.8M2739.4 868.0L-268.9 119.3M2729.8 870.4L-278.4 121.8M2720.3 872.9L-287.8 124.3M2701.1 877.8L-306.6 129.2M2691.6 880.3L-316.1 131.7M2682.0 882.8L-325.5 134.2M2672.4 885.2L-334.9 136.7M2662.9 887.7L-344.3 139.1M2653.3 890.2L-353.8 141.6M2643.8 892.6L-363.2 144.1M2634.2 895.1L-372.6 146.6M2624.6 897.6L-382.0 149.1M2605.5 902.5L-400.9 154.0M2595.9 905.0L-410.3 156.5M2586.4 907.4L-419.7 159.0M2576.8 909.9L-429.1 161.4M2567.3 912.4L-438.6 163.9M2557.7 914.8L-448.0 166.4M2548.2 917.3L-457.4 168.9M2538.6 919.8L-466.8 171.3M2529.0 922.2L-476.2 173.8M2509.9 927.2L-495.1 178.8M2500.4 929.6L-504.5 181.2M2490.8 932.1L-513.9 183.7M2481.3 934.6L-523.3 186.2M2471.7 937.0L-532.7 188.7M2462.2 939.5L-542.1 191.1M2452.6 942.0L-551.6 193.6M2443.1 944.4L-561.0 196.1M2433.5 946.9L-570.4 198.6M2414.4 951.8L-589.2 203.5M2404.9 954.3L-598.6 206.0M2395.3 956.7L-608.0 208.5M2385.8 959.2L-617.4 210.9M2376.2 961.7L-626.8 213.4M2366.7 964.1L-636.2 215.9M2357.1 966.6L-645.7 218.4M2347.6 969.1L-655.1 220.8M2338.0 971.5L-664.5 223.3M2319.0 976.4L-683.3 228.2M2309.4 978.9L-692.7 230.7M2299.9 981.4L-702.1 233.2M2290.3 983.8L-711.5 235.7M2280.8 986.3L-720.9 238.1M2271.3 988.8L-730.3 240.6M2261.7 991.2L-739.7 243.1M2252.2 993.7L-749.1 245.5M2242.6 996.1L-758.5 248.0M2223.6 1001.1L-777.3 253.0M2214.0 1003.5L-786.7 255.4M2204.5 1006.0L-796.1 257.9M2194.9 1008.4L-805.5 260.4M2185.4 1010.9L-814.9 262.8M2175.9 1013.4L-824.3 265.3M2166.3 1015.8L-833.7 267.8M2156.8 1018.3L-843.1 270.2M2147.3 1020.7L-852.5 272.7M2128.2 1025.7L-871.3 277.7M2118.7 1028.1L-880.6 280.1M2109.2 1030.6L-890.0 282.6M2099.6 1033.0L-899.4 285.1M2090.1 1035.5L-908.8 287.5M2080.6 1038.0L-918.2 290.0M2071.0 1040.4L-927.6 292.5M2061.5 1042.9L-937.0 294.9M2052.0 1045.3L-946.4 297.4M2032.9 1050.2L-965.2 302.3M2023.4 1052.7L-974.5 304.8M2013.9 1055.2L-983.9 307.3M2004.4 1057.6L-993.3 309.7M1994.8 1060.1L-1002.7 312.2M1985.3 1062.5L-1012.1 314.7M1975.8 1065.0L-1021.5 317.1M1966.3 1067.4L-1030.9 319.6M1956.7 1069.9L-1040.2 322.1M1937.7 1074.8L-1059.0 327.0M1928.2 1077.3L-1068.4 329.5M1918.7 1079.7L-1077.8 331.9M1909.1 1082.2L-1087.1 334.4M1899.6 1084.6L-1096.5 336.9M1890.1 1087.1L-1105.9 339.3M1880.6 1089.6L-1115.3 341.8M1871.1 1092.0L-1124.7 344.3M1861.6 1094.5L-1134.0 346.7M1842.5 1099.4L-1152.8 351.7M1833.0 1101.8L-1162.2 354.1M1823.5 1104.3L-1171.5 356.6M1814.0 1106.7L-1180.9 359.1M1804.5 1109.2L-1190.3 361.5M1795.0 1111.6L-1199.7 364.0M1785.5 1114.1L-1209.0 366.5M1775.9 1116.6L-1218.4 368.9M1766.4 1119.0L-1227.8 371.4M1747.4 1123.9L-1246.5 376.3M1737.9 1126.4L-1255.9 378.8M1728.4 1128.8L-1265.3 381.2M1718.9 1131.3L-1274.6 383.7M1709.4 1133.7L-1284.0 386.2M1699.9 1136.2L-1293.4 388.6M1690.4 1138.6L-1302.7 391.1M1680.9 1141.1L-1312.1 393.5M1671.4 1143.5L-1321.5 396.0M1652.4 1148.4L-1340.2 400.9M1642.9 1150.9L-1349.6 403.4M1633.4 1153.3L-1358.9 405.9M1623.8 1155.8L-1368.3 408.3M1614.3 1158.3L-1377.7 410.8M1604.8 1160.7L-1387.0 413.2M1595.3 1163.2L-1396.4 415.7M1585.8 1165.6L-1405.8 418.2M1576.3 1168.1L-1415.1 420.6M1557.4 1173.0L-1433.8 425.5M1547.9 1175.4L-1443.2 428.0M1538.4 1177.9L-1452.6 430.5M1528.9 1180.3L-1461.9 432.9M1519.4 1182.8L-1471.3 435.4M1509.9 1185.2L-1480.6 437.8M1500.4 1187.7L-1490.0 440.3M1490.9 1190.1L-1499.3 442.8M1481.4 1192.6L-1508.7 445.2M1462.4 1197.5L-1527.4 450.1M1452.9 1199.9L-1536.8 452.6M1443.4 1202.4L-1546.1 455.1M1433.9 1204.8L-1555.5 457.5M1424.4 1207.3L-1564.8 460.0M1415.0 1209.7L-1574.2 462.4M1405.5 1212.1L-1583.5 464.9M1396.0 1214.6L-1592.9 467.3M1386.5 1217.0L-1602.2 469.8M1367.5 1221.9L-1620.9 474.7M1358.0 1224.4L-1630.3 477.2M1348.6 1226.8L-1639.6 479.6M1339.1 1229.3L-1649.0 482.1M1329.6 1231.7L-1658.3 484.5M1320.1 1234.2L-1667.6 487.0M1310.6 1236.6L-1677.0 489.5M1301.1 1239.1L-1686.3 491.9M1291.7 1241.5L-1695.7 494.4M1272.7 1246.4L-1714.4 499.3M1263.2 1248.9L-1723.7 501.7M1253.7 1251.3L-1733.1 504.2M1244.3 1253.7L-1742.4 506.7M1234.8 1256.2L-1751.7 509.1M1225.3 1258.6L-1761.1 511.6M1215.8 1261.1L-1770.4 514.0M1206.3 1263.5L-1779.8 516.5M1196.9 1266.0L-1789.1 518.9M1177.9 1270.9L-1807.8 523.8M1168.4 1273.3L-1817.1 526.3M1159.0 1275.7L-1826.4 528.7M1149.5 1278.2L-1835.8 531.2M1140.0 1280.6L-1845.1 533.7M1130.6 1283.1L-1854.5 536.1M1121.1 1285.5L-1863.8 538.6M1111.6 1288.0L-1873.1 541.0M1102.1 1290.4L-1882.5 543.5M1083.2 1295.3L-1901.1 548.4M1073.7 1297.7L-1910.4 550.8M1064.3 1300.2L-1919.8 553.3M1054.8 1302.6L-1929.1 555.7M1045.3 1305.1L-1938.4 558.2M1035.9 1307.5L-1947.8 560.6M1026.4 1310.0L-1957.1 563.1M1016.9 1312.4L-1966.4 565.5M1007.5 1314.8L-1975.8 568.0M3949.4 550.8L988.3 1314.9M3939.6 548.3L978.7 1312.4M3929.8 545.9L969.0 1310.0M3920.0 543.5L959.3 1307.6M3910.2 541.1L949.7 1305.2M3900.4 538.6L940.0 1302.8M3890.6 536.2L930.3 1300.3M3880.8 533.8L920.6 1297.9M3871.0 531.3L911.0 1295.5M3851.3 526.5L891.6 1290.7M3841.5 524.0L882.0 1288.2M3831.7 521.6L872.3 1285.8M3821.9 519.2L862.6 1283.4M3812.1 516.7L853.0 1281.0M3802.3 514.3L843.3 1278.5M3792.5 511.9L833.6 1276.1M3782.7 509.5L824.0 1273.7M3772.9 507.0L814.3 1271.3M3753.3 502.2L795.0 1266.4M3743.5 499.7L785.3 1264.0M3733.7 497.3L775.6 1261.6M3723.9 494.9L766.0 1259.2M3714.1 492.5L756.3 1256.8M3704.3 490.0L746.6 1254.4M3694.4 487.6L737.0 1251.9M3684.6 485.2L727.3 1249.5M3674.8 482.7L717.7 1247.1M3655.2 477.9L698.3 1242.3M3645.4 475.4L688.7 1239.8M3635.6 473.0L679.0 1237.4M3625.8 470.6L669.3 1235.0M3616.0 468.2L659.7 1232.6M3606.2 465.7L650.0 1230.2M3596.4 463.3L640.4 1227.7M3586.6 460.9L630.7 1225.3M3576.8 458.4L621.0 1222.9M3557.2 453.6L601.7 1218.1M3547.4 451.2L592.1 1215.7M3537.6 448.7L582.4 1213.2M3527.8 446.3L572.8 1210.8M3518.0 443.9L563.1 1208.4M3508.3 441.5L553.4 1206.0M3498.5 439.0L543.8 1203.6M3488.7 436.6L534.1 1201.1M3478.9 434.2L524.5 1198.7M3459.3 429.3L505.2 1193.9M3449.5 426.9L495.5 1191.5M3439.7 424.5L485.8 1189.1M3429.9 422.0L476.2 1186.6M3420.1 419.6L466.5 1184.2M3410.3 417.2L456.9 1181.8M3400.5 414.7L447.2 1179.4M3390.7 412.3L437.6 1177.0M3380.9 409.9L427.9 1174.6M3361.3 405.0L408.6 1169.7M3351.5 402.6L399.0 1167.3M3341.8 400.2L389.3 1164.9M3332.0 397.8L379.7 1162.5M3322.2 395.3L370.0 1160.1M3312.4 392.9L360.4 1157.6M3302.6 390.5L350.7 1155.2M3292.8 388.1L341.1 1152.8M3283.0 385.6L331.4 1150.4M3263.4 380.8L312.1 1145.6M3253.6 378.4L302.5 1143.1M3243.9 375.9L292.8 1140.7M3234.1 373.5L283.2 1138.3M3224.3 371.1L273.5 1135.9M3214.5 368.7L263.9 1133.5M3204.7 366.2L254.2 1131.1M3194.9 363.8L244.6 1128.7M3185.1 361.4L234.9 1126.2M3165.6 356.5L215.6 1121.4M3155.8 354.1L206.0 1119.0M3146.0 351.7L196.3 1116.6M3136.2 349.3L186.7 1114.2M3126.4 346.8L177.0 1111.7M3116.6 344.4L167.4 1109.3M3106.9 342.0L157.8 1106.9M3097.1 339.6L148.1 1104.5M3087.3 337.1L138.5 1102.1M3067.7 332.3L119.2 1097.3M3057.9 329.9L109.5 1094.8M3048.2 327.4L99.9 1092.4M3038.4 325.0L90.3 1090.0M3028.6 322.6L80.6 1087.6M3018.8 320.2L71.0 1085.2M3009.0 317.7L61.3 1082.8M2999.3 315.3L51.7 1080.4M2989.5 312.9L42.0 1078.0M2969.9 308.0L22.8 1073.1M2960.1 305.6L13.1 1070.7M2950.4 303.2L3.5 1068.3M2940.6 300.8L-6.2 1065.9M2930.8 298.4L-15.8 1063.5M2921.0 295.9L-25.4 1061.1M2911.2 293.5L-35.1 1058.6M2901.5 291.1L-44.7 1056.2M2891.7 288.7L-54.3 1053.8M2872.1 283.8L-73.6 1049.0M2862.4 281.4L-83.3 1046.6M2852.6 279.0L-92.9 1044.2M2842.8 276.6L-102.5 1041.8M2833.0 274.1L-112.2 1039.3M2823.3 271.7L-121.8 1036.9M2813.5 269.3L-131.4 1034.5M2803.7 266.9L-141.1 1032.1M2793.9 264.4L-150.7 1029.7M2774.4 259.6L-170.0 1024.9M2764.6 257.2L-179.6 1022.5M2754.9 254.8L-189.2 1020.0M2745.1 252.3L-198.9 1017.6M2735.3 249.9L-208.5 1015.2M2725.5 247.5L-218.1 1012.8M2715.8 245.1L-227.8 1010.4M2706.0 242.6L-237.4 1008.0M2696.2 240.2L-247.0 1005.6M2676.7 235.4L-266.3 1000.8M2666.9 233.0L-275.9 998.3M2657.2 230.5L-285.6 995.9M2647.4 228.1L-295.2 993.5M2637.6 225.7L-304.8 991.1M2627.8 223.3L-314.4 988.7M2618.1 220.9L-324.1 986.3M2608.3 218.4L-333.7 983.9M2598.5 216.0L-343.3 981.5M2579.0 211.2L-362.6 976.7M2569.2 208.8L-372.2 974.2M2559.5 206.3L-381.8 971.8M2549.7 203.9L-391.5 969.4M2540.0 201.5L-401.1 967.0M2530.2 199.1L-410.7 964.6M2520.4 196.7L-420.3 962.2M2510.7 194.2L-430.0 959.8M2500.9 191.8L-439.6 957.4M2481.4 187.0L-458.8 952.6M2471.6 184.6L-468.5 950.1M2461.8 182.1L-478.1 947.7M2452.1 179.7L-487.7 945.3M2442.3 177.3L-497.3 942.9M2432.6 174.9L-507.0 940.5M2422.8 172.5L-516.6 938.1M2413.0 170.0L-526.2 935.7M2403.3 167.6L-535.8 933.3M2383.8 162.8L-555.1 928.5M2374.0 160.4L-564.7 926.1M2364.2 158.0L-574.3 923.6M2354.5 155.5L-583.9 921.2M2344.7 153.1L-593.5 918.8M2335.0 150.7L-603.2 916.4M2325.2 148.3L-612.8 914.0M2315.5 145.9L-622.4 911.6M2305.7 143.4L-632.0 909.2M2286.2 138.6L-651.3 904.4M2276.4 136.2L-660.9 902.0M2266.7 133.8L-670.5 899.6M2256.9 131.4L-680.1 897.2M2247.2 128.9L-689.7 894.7M2237.4 126.5L-699.3 892.3M2227.6 124.1L-709.0 889.9M2217.9 121.7L-718.6 887.5M2208.1 119.3L-728.2 885.1M2188.6 114.4L-747.4 880.3M2178.9 112.0L-757.0 877.9M2169.1 109.6L-766.6 875.5M2159.4 107.2L-776.3 873.1M2149.6 104.8L-785.9 870.7M2139.9 102.4L-795.5 868.3M2130.1 99.9L-805.1 865.9M2120.4 97.5L-814.7 863.5M2110.6 95.1L-824.3 861.1M2091.1 90.3L-843.5 856.2M2081.4 87.9L-853.2 853.8M2071.6 85.4L-862.8 851.4M2061.9 83.0L-872.4 849.0M2052.1 80.6L-882.0 846.6M2042.4 78.2L-891.6 844.2M2032.6 75.8L-901.2 841.8M2022.9 73.4L-910.8 839.4M2013.1 70.9L-920.4 837.0M1993.6 66.1L-939.6 832.2M1983.9 63.7L-949.3 829.8M1974.1 61.3L-958.9 827.4M1964.4 58.9L-968.5 825.0M1954.7 56.5L-978.1 822.6M1944.9 54.0L-987.7 820.2M1935.2 51.6L-997.3 817.7M1925.4 49.2L-1006.9 815.3M1915.7 46.8L-1016.5 812.9M1896.2 42.0L-1035.7 808.1M1886.4 39.6L-1045.3 805.7M1876.7 37.1L-1054.9 803.3M1867.0 34.7L-1064.5 800.9M1857.2 32.3L-1074.1 798.5M1847.5 29.9L-1083.7 796.1M1837.7 27.5L-1093.3 793.7M1828.0 25.1L-1102.9 791.3M1818.2 22.7L-1112.5 788.9M1798.8 17.8L-1131.7 784.1M1789.0 15.4L-1141.3 781.7M1779.3 13.0L-1150.9 779.3M1769.5 10.6L-1160.6 776.9M1759.8 8.2L-1170.2 774.5M1750.1 5.8L-1179.8 772.1M1740.3 3.3L-1189.4 769.7M1730.6 0.9L-1199.0 767.3M1720.9 -1.5L-1208.6 764.9M1701.4 -6.3L-1227.8 760.0M1691.6 -8.7L-1237.3 757.6M1681.9 -11.1L-1246.9 755.2M1672.2 -13.5L-1256.5 752.8M1662.4 -16.0L-1266.1 750.4M1652.7 -18.4L-1275.7 748.0M1643.0 -20.8L-1285.3 745.6M1633.2 -23.2L-1294.9 743.2M1623.5 -25.6L-1304.5 740.8M1604.0 -30.4L-1323.7 736.0M1594.3 -32.8L-1333.3 733.6M1584.6 -35.3L-1342.9 731.2M1574.8 -37.7L-1352.5 728.8M1565.1 -40.1L-1362.1 726.4M1555.4 -42.5L-1371.7 724.0M1545.6 -44.9L-1381.3 721.6M1535.9 -47.3L-1390.9 719.2M1526.2 -49.7L-1400.5 716.8M1506.7 -54.5L-1419.7 712.0M1497.0 -57.0L-1429.3 709.6M1487.2 -59.4L-1438.8 707.2M1477.5 -61.8L-1448.4 704.8M1467.8 -64.2L-1458.0 702.4M1458.1 -66.6L-1467.6 700.0M1448.3 -69.0L-1477.2 697.6M1438.6 -71.4L-1486.8 695.2M1428.9 -73.8L-1496.4 692.8M1409.4 -78.7L-1515.6 688.0M1399.7 -81.1L-1525.2 685.6M1390.0 -83.5L-1534.8 683.2M1380.2 -85.9L-1544.3 680.8M1370.5 -88.3L-1553.9 678.4M1360.8 -90.7L-1563.5 676.0M1351.1 -93.1L-1573.1 673.6M1341.3 -95.5L-1582.7 671.2M1331.6 -97.9L-1592.3 668.8M1312.2 -102.8L-1611.5 664.0M1302.4 -105.2L-1621.0 661.6M1292.7 -107.6L-1630.6 659.2M1283.0 -110.0L-1640.2 656.8M1273.3 -112.4L-1649.8 654.4M1263.5 -114.8L-1659.4 652.0M1253.8 -117.2L-1669.0 649.6M1244.1 -119.6L-1678.5 647.2M1234.4 -122.0L-1688.1 644.8M1214.9 -126.9L-1707.3 640.0M1205.2 -129.3L-1716.9 637.6M1195.5 -131.7L-1726.5 635.2M1185.8 -134.1L-1736.0 632.8M1176.1 -136.5L-1745.6 630.4M1166.3 -138.9L-1755.2 628.0M1156.6 -141.3L-1764.8 625.6M1146.9 -143.7L-1774.4 623.2M1137.2 -146.1L-1784.0 620.8M1117.7 -150.9L-1803.1 616.0M1108.0 -153.3L-1812.7 613.6M1098.3 -155.8L-1822.3 611.2M1088.6 -158.2L-1831.9 608.8M1078.9 -160.6L-1841.4 606.4M1069.2 -163.0L-1851.0 604.0M1059.4 -165.4L-1860.6 601.6M1049.7 -167.8L-1870.2 599.2M1040.0 -170.2L-1879.7 596.8M1020.6 -175.0L-1898.9 592.0M1010.9 -177.4L-1908.5 589.6M1001.2 -179.8L-1918.1 587.2M991.4 -182.2L-1927.6 584.8M981.7 -184.6L-1937.2 582.4M972.0 -187.0L-1946.8 580.0M962.3 -189.5L-1956.4 577.6M952.6 -191.9L-1965.9 575.2M942.9 -194.3L-1975.5 572.8" stroke="rgba(0,0,0,0.25)" stroke-width="1.0" fill="none"/><path d="M3959.3 553.2L933.2 -196.7M3862.9 578.1L838.2 -171.7M3766.5 602.9L743.2 -146.8M3670.3 627.8L648.4 -121.8M3574.0 652.6L553.6 -96.9M3477.9 677.4L458.8 -72.0M3381.8 702.2L364.1 -47.1M3285.7 727.0L269.5 -22.2M3189.8 751.8L174.9 2.7M3093.8 776.5L80.3 27.5M2998.0 801.2L-14.1 52.3M2902.2 826.0L-108.6 77.2M2806.4 850.7L-202.9 102.0M2710.7 875.4L-297.2 126.8M2615.1 900.0L-391.5 151.5M2519.5 924.7L-485.7 176.3M2424.0 949.4L-579.8 201.0M2328.5 974.0L-673.9 225.8M2137.7 1023.2L-861.9 275.2M2042.5 1047.8L-955.8 299.9M1947.2 1072.4L-1049.6 324.5M1852.0 1096.9L-1143.4 349.2M1756.9 1121.5L-1237.2 373.8M1661.9 1146.0L-1330.8 398.5M1566.9 1170.5L-1424.5 423.1M1471.9 1195.0L-1518.0 447.7M1377.0 1219.5L-1611.6 472.3M1282.2 1244.0L-1705.0 496.8M1187.4 1268.4L-1798.4 521.4M1092.7 1292.9L-1891.8 545.9M998.0 1317.3L-1985.1 570.4M3959.3 553.2L998.0 1317.3M3861.1 528.9L901.3 1293.1M3763.1 504.6L804.6 1268.9M3665.0 480.3L708.0 1244.7M3567.0 456.0L611.4 1220.5M3469.1 431.7L514.8 1196.3M3371.1 407.5L418.3 1172.1M3273.2 383.2L321.8 1148.0M3175.3 359.0L225.3 1123.8M3077.5 334.7L128.8 1099.7M2979.7 310.5L32.4 1075.5M2881.9 286.2L-64.0 1051.4M2784.2 262.0L-160.3 1027.3M2686.5 237.8L-256.7 1003.2M2491.1 189.4L-449.2 955.0M2393.5 165.2L-545.4 930.9M2295.9 141.0L-641.6 906.8M2198.4 116.9L-737.8 882.7M2100.9 92.7L-833.9 858.6M2003.4 68.5L-930.0 834.6M1905.9 44.4L-1026.1 810.5M1808.5 20.2L-1122.1 786.5M1711.1 -3.9L-1218.2 762.5M1613.8 -28.0L-1314.1 738.4M1516.4 -52.1L-1410.1 714.4M1419.1 -76.2L-1506.0 690.4M1321.9 -100.3L-1601.9 666.4M1224.7 -124.4L-1697.7 642.4M1127.5 -148.5L-1793.5 618.4M1030.3 -172.6L-1889.3 594.4M933.2 -196.7L-1985.1 570.4" stroke="#000" stroke-width="1.0" fill="none"/><path d="M2588.8 213.6L-353.0 979.1" stroke="#e39b9b" stroke-width="1" fill="none"/><path d="M2233.1 998.6L-767.9 250.5" stroke="#9fdf9f" stroke-width="1" fill="none"/></g>
<path d="M1065.2 707.4L1151.1 728.9" stroke="#2f8f3c" stroke-width="1.1"/>

<g>
<ellipse cx="1856" cy="232" rx="30" ry="8" fill="#000" opacity="0.06"/>
<polygon points="1823,177 1856,183 1856,235.5 1824,223" fill="#ebebeb" opacity="0.95"/>
<polygon points="1856,183 1890,177 1889,222.5 1856,235.5" fill="#e2e2e2" opacity="0.95"/>
<polygon points="1823,177 1856,172.5 1890,177 1856,183" fill="#f2f2f2" opacity="0.95"/>
<path d="M1823,177 L1856,183 L1890,177 M1856,183 L1856,235.5 M1823,177 L1824,223 L1856,235.5 L1889,222.5 L1890,177 M1823,177 L1856,172.5 L1890,177" stroke="#6a6a6a" stroke-width="0.9" stroke-dasharray="3,2" fill="none"/>
<text x="1829" y="214" font-size="22" fill="#8c8c8c" font-family="Liberation Sans, sans-serif">右</text>
<text x="1864" y="214" font-size="22" fill="#8c8c8c" font-family="Liberation Sans, sans-serif">後</text>
<text x="1851.5" y="164.5" font-size="11.5" fill="#6a6ae0" font-family="Liberation Sans">Z</text>
<path d="M1856,166.5 L1856,172" stroke="#6a6ae0" stroke-width="1.4"/>
<text x="1807.5" y="232" font-size="11.5" fill="#ee6b6b" font-family="Liberation Sans">X</text>
<path d="M1818,225 L1824,223" stroke="#ee6b6b" stroke-width="1.4"/>
<text x="1897.5" y="231.5" font-size="11.5" fill="#80e080" font-family="Liberation Sans">Y</text>
<path d="M1889,222.5 L1896,224.5" stroke="#80e080" stroke-width="1.4"/>
</g>
</svg>
<div class="a" style="left:0;top:989px;width:1920px;height:2px;background:#cdcdcd"></div>

<div class="a" style="left:4px;top:141px;width:300px;height:25px;background:#f0f0f0;border:1px solid #c8c8c8"></div>
<svg class="a" style="left:9px;top:150px" width="11" height="8"><path d="M0 4L5 0V8Z M5 4L10 0V8Z" fill="#333"/></svg>
<div class="t" style="left:28.7px;top:147px;font-size:10.5px;color:#333;transform:scaleX(0.716);transform-origin:0 0">ブラウザ</div>
<svg class="a" style="left:282px;top:148px" width="11" height="11"><circle cx="5.5" cy="5.5" r="4.6" fill="#222"/><rect x="2.8" y="4.8" width="5.4" height="1.5" fill="#f0f0f0"/></svg>
<div class="a" style="left:299px;top:148px;width:1px;height:11px;background:#555"></div><div class="a" style="left:301px;top:150px;width:1px;height:7px;background:#999"></div>
<div class="a" style="left:40px;top:171px;width:224px;height:19px;background:#efefef"></div>
<svg class="a" style="left:21px;top:175px" width="12" height="12"><defs><linearGradient id="tg181" x1="0" y1="0" x2="1" y2="1"><stop offset="0" stop-color="#ddd"/><stop offset="1" stop-color="#555"/></linearGradient></defs><path d="M0.8 11L10.8 0.8V11Z" fill="url(#tg181)" stroke="#222" stroke-width="1"/></svg>
<svg class="a" style="left:43px;top:176px" width="16" height="10"><path d="M0.5 5Q8 -3 15.5 5Q8 13 0.5 5Z" fill="#a0a0a0"/><circle cx="8" cy="5" r="2.6" fill="#f0f0f0"/><circle cx="8" cy="5" r="1.4" fill="#a0a0a0"/></svg>
<div class="a" style="left:65px;top:173px;width:174px;height:16px;background:#939393"></div>
<svg class="a" style="left:68px;top:173px" width="17" height="16"><path d="M1.5 15V2.5Q1.5 0.8 3.2 0.8H6.5Q8 0.8 8 2.5V7H13Q15.2 7 15.2 9V15Z" fill="#e6e6e6" stroke="#222" stroke-width="0.9"/><path d="M1.5 8H8V15M8 11H15" stroke="#999" stroke-width="0.6" fill="none"/></svg>
<div class="t" style="left:97.8px;top:175px;font-size:10.5px;color:#fff;font-weight:bold;;transform:scaleX(0.861);transform-origin:0 0">14、リアスカートセンター v10</div>
<svg class="a" style="left:243px;top:175px" width="13" height="13"><circle cx="6.5" cy="6.5" r="5.5" fill="none" stroke="#222" stroke-width="1"/><circle cx="6.5" cy="6.5" r="2.2" fill="#222"/></svg>
<div class="a" style="left:58px;top:195px;width:118px;height:19px;background:#efefef"></div>
<svg class="a" style="left:40px;top:198px" width="11" height="14"><path d="M1 1L9.5 7L1 13Z" fill="#e8e8e8" stroke="#222" stroke-width="1.3" stroke-linejoin="round"/></svg>
<svg class="a" style="left:61px;top:197px" width="16" height="16"><g transform="translate(8,8)"><circle r="5.5" fill="#9b9b9b"/><g fill="#9b9b9b"><rect x="-1.7" y="-8" width="3.4" height="4" transform="rotate(0)"/><rect x="-1.7" y="-8" width="3.4" height="4" transform="rotate(45)"/><rect x="-1.7" y="-8" width="3.4" height="4" transform="rotate(90)"/><rect x="-1.7" y="-8" width="3.4" height="4" transform="rotate(135)"/><rect x="-1.7" y="-8" width="3.4" height="4" transform="rotate(180)"/><rect x="-1.7" y="-8" width="3.4" height="4" transform="rotate(225)"/><rect x="-1.7" y="-8" width="3.4" height="4" transform="rotate(270)"/><rect x="-1.7" y="-8" width="3.4" height="4" transform="rotate(315)"/></g><circle r="2.3" fill="#f0f0f0"/></g></svg>
<div class="t" style="left:90.4px;top:199px;font-size:10.5px;color:#222;;transform:scaleX(0.787);transform-origin:0 0">ドキュメントの設定</div>
<div class="a" style="left:58px;top:219px;width:90px;height:19px;background:#efefef"></div>
<svg class="a" style="left:40px;top:222px" width="11" height="14"><path d="M1 1L9.5 7L1 13Z" fill="#e8e8e8" stroke="#222" stroke-width="1.3" stroke-linejoin="round"/></svg>
<svg class="a" style="left:61px;top:223px" width="16" height="13"><path d="M0 0H6L7.5 1.8H16V12.5H0Z" fill="#9b9b9b"/><path d="M0 3H16" stroke="#f0f0f0" stroke-width="0.8"/></svg>
<div class="t" style="left:89.5px;top:223px;font-size:10.5px;color:#222;;transform:scaleX(0.840);transform-origin:0 0">ビュー管理</div>
<div class="a" style="left:58px;top:243px;width:90px;height:19px;background:#efefef"></div>
<svg class="a" style="left:40px;top:246px" width="11" height="14"><path d="M1 1L9.5 7L1 13Z" fill="#e8e8e8" stroke="#222" stroke-width="1.3" stroke-linejoin="round"/></svg>
<svg class="a" style="left:61px;top:248px" width="16" height="10"><path d="M0.5 5Q8 -3 15.5 5Q8 13 0.5 5Z" fill="#dadada"/><circle cx="8" cy="5" r="2.6" fill="#f0f0f0"/><circle cx="8" cy="5" r="1.4" fill="#dadada"/><path d="M3 0.5L13 9.5" stroke="#f0f0f0" stroke-width="1.6"/><path d="M2.5 1.5L12.5 10" stroke="#dadada" stroke-width="1"/></svg>
<svg class="a" style="left:86px;top:247px" width="16" height="13"><path d="M0 0H6L7.5 1.8H16V12.5H0Z" fill="#9b9b9b"/><path d="M0 3H16" stroke="#f0f0f0" stroke-width="0.8"/></svg>
<div class="t" style="left:115.6px;top:247px;font-size:10.5px;color:#222;;transform:scaleX(0.914);transform-origin:0 0">原点</div>
<div class="a" style="left:58px;top:267px;width:90px;height:19px;background:#efefef"></div>
<svg class="a" style="left:40px;top:270px" width="11" height="14"><path d="M1 1L9.5 7L1 13Z" fill="#e8e8e8" stroke="#222" stroke-width="1.3" stroke-linejoin="round"/></svg>
<svg class="a" style="left:61px;top:272px" width="16" height="10"><path d="M0.5 5Q8 -3 15.5 5Q8 13 0.5 5Z" fill="#a0a0a0"/><circle cx="8" cy="5" r="2.6" fill="#f0f0f0"/><circle cx="8" cy="5" r="1.4" fill="#a0a0a0"/></svg>
<svg class="a" style="left:86px;top:271px" width="16" height="13"><path d="M0 0H6L7.5 1.8H16V12.5H0Z" fill="#9b9b9b"/><path d="M0 3H16" stroke="#f0f0f0" stroke-width="0.8"/></svg>
<div class="t" style="left:115.6px;top:271px;font-size:10.5px;color:#222;;transform:scaleX(0.700);transform-origin:0 0">ボディ</div>
<div class="a" style="left:58px;top:291px;width:99px;height:19px;background:#efefef"></div>
<svg class="a" style="left:39px;top:295px" width="12" height="12"><defs><linearGradient id="tg301" x1="0" y1="0" x2="1" y2="1"><stop offset="0" stop-color="#ddd"/><stop offset="1" stop-color="#555"/></linearGradient></defs><path d="M0.8 11L10.8 0.8V11Z" fill="url(#tg301)" stroke="#222" stroke-width="1"/></svg>
<svg class="a" style="left:61px;top:296px" width="16" height="10"><path d="M0.5 5Q8 -3 15.5 5Q8 13 0.5 5Z" fill="#a0a0a0"/><circle cx="8" cy="5" r="2.6" fill="#f0f0f0"/><circle cx="8" cy="5" r="1.4" fill="#a0a0a0"/></svg>
<svg class="a" style="left:86px;top:295px" width="16" height="13"><path d="M0 0H6L7.5 1.8H16V12.5H0Z" fill="#9b9b9b"/><path d="M0 3H16" stroke="#f0f0f0" stroke-width="0.8"/></svg>
<div class="t" style="left:115.6px;top:295px;font-size:10.5px;color:#222;;transform:scaleX(0.686);transform-origin:0 0">スケッチ</div>
<div class="a" style="left:76px;top:315px;width:103px;height:19px;background:#efefef"></div>
<svg class="a" style="left:79px;top:320px" width="16" height="10"><path d="M0.5 5Q8 -3 15.5 5Q8 13 0.5 5Z" fill="#dadada"/><circle cx="8" cy="5" r="2.6" fill="#f0f0f0"/><circle cx="8" cy="5" r="1.4" fill="#dadada"/><path d="M3 0.5L13 9.5" stroke="#f0f0f0" stroke-width="1.6"/><path d="M2.5 1.5L12.5 10" stroke="#dadada" stroke-width="1"/></svg>
<svg class="a" style="left:103px;top:317px" width="17" height="16"><path d="M1.5 1.5H12.5M1.5 1.5V13.5M1.5 13.5H6M12.5 1.5V6" stroke="#333" stroke-width="0.9" stroke-dasharray="2,1.2" fill="none"/><rect x="0.5" y="0.5" width="2" height="2" fill="#1e88e5"/><rect x="11.5" y="0.5" width="2" height="2" fill="#1e88e5"/><rect x="0.5" y="12.5" width="2" height="2" fill="#1e88e5"/><path d="M8 15L15 8" stroke="#f0b030" stroke-width="3"/><path d="M14 7L16 9" stroke="#e04040" stroke-width="2.4"/></svg>
<div class="t" style="left:133.3px;top:319px;font-size:10.5px;color:#222;;transform:scaleX(0.703);transform-origin:0 0">スケッチ 1</div>
<div class="a" style="left:76px;top:339px;width:105px;height:19px;background:#efefef"></div>
<svg class="a" style="left:79px;top:344px" width="16" height="10"><path d="M0.5 5Q8 -3 15.5 5Q8 13 0.5 5Z" fill="#dadada"/><circle cx="8" cy="5" r="2.6" fill="#f0f0f0"/><circle cx="8" cy="5" r="1.4" fill="#dadada"/><path d="M3 0.5L13 9.5" stroke="#f0f0f0" stroke-width="1.6"/><path d="M2.5 1.5L12.5 10" stroke="#dadada" stroke-width="1"/></svg>
<svg class="a" style="left:103px;top:341px" width="17" height="16"><path d="M1.5 1.5H12.5M1.5 1.5V13.5M1.5 13.5H6M12.5 1.5V6" stroke="#333" stroke-width="0.9" stroke-dasharray="2,1.2" fill="none"/><rect x="1" y="1" width="2" height="2" fill="#333"/><rect x="11.5" y="1" width="2" height="2" fill="#333"/><rect x="1" y="12.5" width="2" height="2" fill="#333"/><rect x="8.5" y="9" width="7" height="6" fill="#e25b5b"/><path d="M10 9.5V7.8Q12 5.6 14 7.8V9.5" stroke="#e25b5b" stroke-width="1.2" fill="none"/><rect x="9.5" y="10" width="5" height="1" fill="#fff" opacity=".6"/></svg>
<div class="t" style="left:133.3px;top:343px;font-size:10.5px;color:#222;;transform:scaleX(0.714);transform-origin:0 0">スケッチ 3</div>
<div class="a" style="left:76px;top:363px;width:105px;height:19px;background:#efefef"></div>
<svg class="a" style="left:79px;top:368px" width="16" height="10"><path d="M0.5 5Q8 -3 15.5 5Q8 13 0.5 5Z" fill="#dadada"/><circle cx="8" cy="5" r="2.6" fill="#f0f0f0"/><circle cx="8" cy="5" r="1.4" fill="#dadada"/><path d="M3 0.5L13 9.5" stroke="#f0f0f0" stroke-width="1.6"/><path d="M2.5 1.5L12.5 10" stroke="#dadada" stroke-width="1"/></svg>
<svg class="a" style="left:103px;top:365px" width="17" height="16"><path d="M1.5 1.5H12.5M1.5 1.5V13.5M1.5 13.5H6M12.5 1.5V6" stroke="#333" stroke-width="0.9" stroke-dasharray="2,1.2" fill="none"/><rect x="0.5" y="0.5" width="2" height="2" fill="#1e88e5"/><rect x="11.5" y="0.5" width="2" height="2" fill="#1e88e5"/><rect x="0.5" y="12.5" width="2" height="2" fill="#1e88e5"/><path d="M8 15L15 8" stroke="#f0b030" stroke-width="3"/><path d="M14 7L16 9" stroke="#e04040" stroke-width="2.4"/></svg>
<div class="t" style="left:133.3px;top:367px;font-size:10.5px;color:#222;;transform:scaleX(0.714);transform-origin:0 0">スケッチ 4</div>
<div class="a" style="left:76px;top:387px;width:105px;height:19px;background:#efefef"></div>
<svg class="a" style="left:79px;top:392px" width="16" height="10"><path d="M0.5 5Q8 -3 15.5 5Q8 13 0.5 5Z" fill="#dadada"/><circle cx="8" cy="5" r="2.6" fill="#f0f0f0"/><circle cx="8" cy="5" r="1.4" fill="#dadada"/><path d="M3 0.5L13 9.5" stroke="#f0f0f0" stroke-width="1.6"/><path d="M2.5 1.5L12.5 10" stroke="#dadada" stroke-width="1"/></svg>
<svg class="a" style="left:103px;top:389px" width="17" height="16"><path d="M1.5 1.5H12.5M1.5 1.5V13.5M1.5 13.5H6M12.5 1.5V6" stroke="#333" stroke-width="0.9" stroke-dasharray="2,1.2" fill="none"/><rect x="0.5" y="0.5" width="2" height="2" fill="#1e88e5"/><rect x="11.5" y="0.5" width="2" height="2" fill="#1e88e5"/><rect x="0.5" y="12.5" width="2" height="2" fill="#1e88e5"/><path d="M8 15L15 8" stroke="#f0b030" stroke-width="3"/><path d="M14 7L16 9" stroke="#e04040" stroke-width="2.4"/></svg>
<div class="t" style="left:133.3px;top:391px;font-size:10.5px;color:#222;;transform:scaleX(0.714);transform-origin:0 0">スケッチ 2</div>
<div class="a" style="left:58px;top:411px;width:138px;height:19px;background:#efefef"></div>
<svg class="a" style="left:40px;top:414px" width="11" height="14"><path d="M1 1L9.5 7L1 13Z" fill="#e8e8e8" stroke="#222" stroke-width="1.3" stroke-linejoin="round"/></svg>
<svg class="a" style="left:61px;top:416px" width="16" height="10"><path d="M0.5 5Q8 -3 15.5 5Q8 13 0.5 5Z" fill="#dadada"/><circle cx="8" cy="5" r="2.6" fill="#f0f0f0"/><circle cx="8" cy="5" r="1.4" fill="#dadada"/><path d="M3 0.5L13 9.5" stroke="#f0f0f0" stroke-width="1.6"/><path d="M2.5 1.5L12.5 10" stroke="#dadada" stroke-width="1"/></svg>
<svg class="a" style="left:86px;top:415px" width="16" height="13"><path d="M0 0H6L7.5 1.8H16V12.5H0Z" fill="#9b9b9b"/><path d="M0 3H16" stroke="#f0f0f0" stroke-width="0.8"/></svg>
<div class="t" style="left:115.6px;top:415px;font-size:10.5px;color:#222;;transform:scaleX(0.712);transform-origin:0 0">コンストラクション</div>
<div class="a" style="left:58px;top:435px;width:195px;height:19px;background:#efefef"></div>
<svg class="a" style="left:40px;top:438px" width="11" height="14"><path d="M1 1L9.5 7L1 13Z" fill="#e8e8e8" stroke="#222" stroke-width="1.3" stroke-linejoin="round"/></svg>
<svg class="a" style="left:61px;top:440px" width="16" height="10"><path d="M0.5 5Q8 -3 15.5 5Q8 13 0.5 5Z" fill="#a0a0a0"/><circle cx="8" cy="5" r="2.6" fill="#f0f0f0"/><circle cx="8" cy="5" r="1.4" fill="#a0a0a0"/></svg>
<svg class="a" style="left:86px;top:437px" width="16" height="16"><path d="M1 4.5L4.5 1H15V11.5L11.5 15H1Z" fill="#dcdcdc" stroke="#333" stroke-width="1" stroke-linejoin="round"/><path d="M1 4.5H11.5V15M11.5 4.5L15 1" stroke="#333" stroke-width="0.9" fill="none"/></svg>
<svg class="a" style="left:111px;top:437px" width="16" height="16"><path d="M6.5 9.5L9.5 6.5" stroke="#333" stroke-width="2"/><path d="M7.5 4.5L9.5 2.5Q11.5 0.5 13.5 2.5Q15.5 4.5 13.5 6.5L11.5 8.5M8.5 11.5L6.5 13.5Q4.5 15.5 2.5 13.5Q0.5 11.5 2.5 9.5L4.5 7.5" stroke="#333" stroke-width="2.2" fill="none"/></svg>
<div class="t" style="left:141.6px;top:439px;font-size:10.5px;color:#222;;transform:scaleX(0.813);transform-origin:0 0">13、バズーカラック v46:1</div>
<div class="a" style="left:4px;top:961px;width:300px;height:24px;background:#f0f0f0;border:1px solid #c8c8c8"></div>
<div class="t" style="left:28.1px;top:967px;font-size:10.5px;color:#333;transform:scaleX(0.711);transform-origin:0 0">コメント</div>
<svg class="a" style="left:282px;top:968px" width="11" height="11"><circle cx="5.5" cy="5.5" r="4.6" fill="#222"/><rect x="2.8" y="4.8" width="5.4" height="1.5" fill="#f0f0f0"/><rect x="4.8" y="2.8" width="1.5" height="5.4" fill="#f0f0f0"/></svg>
<div class="a" style="left:299px;top:967px;width:1px;height:11px;background:#555"></div><div class="a" style="left:301px;top:969px;width:1px;height:7px;background:#999"></div>
<div class="a" style="left:833px;top:962px;width:253px;height:24px;background:rgba(240,240,240,0.9)"></div>
<svg class="a" style="left:833px;top:962px" width="253" height="24">
<g stroke="#2a2a2a" fill="none">
<path d="M11.4 19.7V6" stroke-width="1.3"/><path d="M8.8 7.5L11.4 3.8L14 7.5Z" fill="#fff" stroke-width="1"/>
<path d="M16 10.5Q19 12 16.5 14Q11 16.5 5.5 14Q3 12 6.5 10.3" stroke-width="1.2"/><path d="M6 13L4.5 15.5L7.5 16.5Z" fill="#2a2a2a" stroke-width="0.6"/>
<rect x="36.8" y="9" width="14.5" height="10.5" stroke-width="1.1" fill="#f4f4f4"/><rect x="39.5" y="12.5" width="9" height="3.6" fill="#bbb" stroke-width="0.9"/>
<path d="M37.5 9L41 5.5M42 9L45.5 5.5H50.5V9" stroke-width="1"/>
<path d="M65.5 18.5Q62 15 62.5 11.5Q63.5 10.5 65 12V6.5Q65.5 5 67 6V11M67 10.5V4.5Q68 3 69.5 4.5V10.5M69.5 10.5V5Q70.5 3.8 72 5V11M72 11V7Q73 6 74.5 7.3V14Q74 19 69 19.5Q67 19.5 65.5 18.5" stroke-width="1" fill="#fff"/>
<circle cx="93.3" cy="11.3" r="4.6" stroke-width="1.3" fill="#f8f8f8"/><path d="M96.6 14.6L100.3 18.3" stroke-width="2.6"/><path d="M99 4.5H103.5M101.2 2.3V6.7M99 8H103.5" stroke-width="0.9"/>
<circle cx="120.7" cy="10.8" r="6" stroke-width="1.3" fill="#f8f8f8"/><rect x="117.6" y="7.8" width="6.2" height="6" stroke-width="1"/><path d="M125 15L129.2 19.2" stroke-width="2.6"/>
</g>
<path d="M24.7 9.8H29.7L27.2 12.8Z M135.8 9.8H140.8L138.3 12.8Z M173.7 9.8H178.7L176.2 12.8Z M204.7 9.8H209.7L207.2 12.8Z M235.6 9.8H240.6L238.1 12.8Z" fill="#2a2a2a"/>
<rect x="155.7" y="4.8" width="14.5" height="11" fill="#a9c7ea" stroke="#4a4a4a" stroke-width="1.1"/><path d="M159.5 19H166.5M163 16V19" stroke="#4a4a4a" stroke-width="1.3"/>
<g stroke="#666" stroke-width="0.7"><rect x="186.3" y="4.6" width="15" height="15" fill="#cfd3da" stroke="#555" stroke-width="1"/><path d="M189.3 4.6V19.6M192.3 4.6V19.6M195.3 4.6V19.6M198.3 4.6V19.6M186.3 7.6H201.3M186.3 10.6H201.3M186.3 13.6H201.3M186.3 16.6H201.3"/></g>
<g fill="#a9c7ea" stroke="#30579a" stroke-width="1"><rect x="217.5" y="5.5" width="6.5" height="5.5"/><rect x="225" y="5.5" width="6.5" height="5.5"/><rect x="217.5" y="12" width="6.5" height="5.5"/><rect x="225" y="12" width="6.5" height="5.5"/></g>
</svg>

<!-- timeline -->
<div class="a" style="left:0;top:991px;width:1920px;height:49px;background:#f0f0f0"></div>
<svg class="a" style="left:0;top:995px" width="140" height="40" viewBox="0 995 140 40"><g fill="#3d3d3d">
<rect x="11" y="1009" width="2.2" height="13.6"/><path d="M23 1009.5V1022L13.5 1015.8Z"/>
<path d="M44.5 1010V1022L35.5 1016Z"/><rect x="46" y="1013" width="2.2" height="6"/>
<path d="M61 1008.5V1024L72.5 1016.2Z"/>
<rect x="85" y="1013" width="2.2" height="6"/><path d="M87.5 1010V1022L97.5 1016Z"/>
<path d="M111 1009.5V1022L120.5 1015.8Z"/><rect x="121" y="1009" width="2.2" height="13.6"/>
</g></svg>
<div class="a" style="left:154px;top:1031px;width:385px;height:2px;background:#cfcfcf"></div>
<div class="a" style="left:154px;top:1026px;width:2px;height:6px;background:#cfcfcf"></div><div class="a" style="left:178px;top:1026px;width:2px;height:6px;background:#cfcfcf"></div><div class="a" style="left:202px;top:1026px;width:2px;height:6px;background:#cfcfcf"></div><div class="a" style="left:226px;top:1026px;width:2px;height:6px;background:#cfcfcf"></div><div class="a" style="left:250px;top:1026px;width:2px;height:6px;background:#cfcfcf"></div><div class="a" style="left:274px;top:1026px;width:2px;height:6px;background:#cfcfcf"></div><div class="a" style="left:298px;top:1026px;width:2px;height:6px;background:#cfcfcf"></div><div class="a" style="left:322px;top:1026px;width:2px;height:6px;background:#cfcfcf"></div><div class="a" style="left:346px;top:1026px;width:2px;height:6px;background:#cfcfcf"></div><div class="a" style="left:370px;top:1026px;width:2px;height:6px;background:#cfcfcf"></div><div class="a" style="left:394px;top:1026px;width:2px;height:6px;background:#cfcfcf"></div><div class="a" style="left:418px;top:1026px;width:2px;height:6px;background:#cfcfcf"></div><div class="a" style="left:442px;top:1026px;width:2px;height:6px;background:#cfcfcf"></div><div class="a" style="left:466px;top:1026px;width:2px;height:6px;background:#cfcfcf"></div><div class="a" style="left:490px;top:1026px;width:2px;height:6px;background:#cfcfcf"></div><div class="a" style="left:514px;top:1026px;width:2px;height:6px;background:#cfcfcf"></div><div class="a" style="left:538px;top:1026px;width:2px;height:6px;background:#cfcfcf"></div>
<svg class="a" style="left:0;top:995px" width="600" height="45" viewBox="0 995 600 45"><g transform="translate(146,1007)"><polygon points="0.5,3.5 3.5,0.5 15.5,0.5 12.5,3.5" fill="#e6e6e6" stroke="#555" stroke-width="0.9"/><polygon points="12.5,3.5 15.5,0.5 15.5,12 12.5,15.5" fill="#c8c8c8" stroke="#555" stroke-width="0.9"/><rect x="0.5" y="3.5" width="12" height="12" fill="#d6d6d6" stroke="#555" stroke-width="1"/><path d="M4 11L9 6M5.5 6.5Q8 3.5 10 5.5Q12 7.5 9 10M7.5 12Q5 14.5 3 12.5Q1 10.5 4 8" stroke="#888" stroke-width="1.1" fill="none"/></g><g transform="translate(170,1007)"><path d="M5 0.5H3L0.5 3V15.5H5" fill="#dcdcdc" stroke="#555" stroke-width="0.9"/><polygon points="5.5,4 10,0.5 10,12 5.5,15.5" fill="#52c079"/><polygon points="11.5,4 16,0.5 16,12 11.5,15.5" fill="#e8935a"/></g><g transform="translate(194,1007)"><path d="M1.5 1.5H12.5M1.5 1.5V13.5M1.5 13.5H7M12.5 1.5V7" stroke="#444" stroke-width="0.9" stroke-dasharray="2,1.3" fill="none"/><rect x="0.5" y="0.5" width="2" height="2" fill="#1e88e5"/><rect x="11.5" y="0.5" width="2" height="2" fill="#1e88e5"/><rect x="0.5" y="12.5" width="2" height="2" fill="#1e88e5"/><path d="M8.5 15L14.5 9" stroke="#f0b030" stroke-width="2.6"/><path d="M13.5 8L15.8 10.3" stroke="#e04040" stroke-width="2"/></g><g transform="translate(218,1007)"><polygon points="0,12.5 10,12.5 13,10 13,13 10,15.5 0,15.5" fill="#bdbdbd"/><rect x="0" y="3.3" width="10" height="9.2" fill="#64aee8"/><polygon points="0,3.3 3,0 13,0 10,3.3" fill="#8fcaf5"/><polygon points="10,3.3 13,0 13,10 10,12.5" fill="#4a94d4"/><path d="M15.5 13V1.5" stroke="#222" stroke-width="1.1"/><path d="M14 2.5L15.5 0L17 2.5Z" fill="#222"/></g><g transform="translate(242,1007)"><path d="M0.5 15V6L4 2H9L12 15Z" fill="#dcdcdc" stroke="#444" stroke-width="0.9"/><path d="M6 4L10 1.5L14.5 12L11 14Z" fill="#5aaae6"/><path d="M12 1L15 7" stroke="#222" stroke-width="1"/></g><g transform="translate(266,1007)"><polygon points="0,12.5 10,12.5 13,10 13,13 10,15.5 0,15.5" fill="#bdbdbd"/><rect x="0" y="3.3" width="10" height="9.2" fill="#64aee8"/><polygon points="0,3.3 3,0 13,0 10,3.3" fill="#8fcaf5"/><polygon points="10,3.3 13,0 13,10 10,12.5" fill="#4a94d4"/><path d="M15.5 13V1.5" stroke="#222" stroke-width="1.1"/><path d="M14 2.5L15.5 0L17 2.5Z" fill="#222"/></g><g transform="translate(290,1007)"><path d="M0.5 15V6L4 2H9L12 15Z" fill="#dcdcdc" stroke="#444" stroke-width="0.9"/><path d="M6 4L10 1.5L14.5 12L11 14Z" fill="#5aaae6"/><path d="M12 1L15 7" stroke="#222" stroke-width="1"/></g><g transform="translate(314,1007)"><polygon points="0.5,3.5 3.5,0.5 15.5,0.5 12.5,3.5" fill="#efefef" stroke="#444" stroke-width="0.9"/><polygon points="12.5,3.5 15.5,0.5 15.5,12 12.5,15.5" fill="#c4c4c4" stroke="#444" stroke-width="0.9"/><rect x="0.5" y="3.5" width="12" height="12" fill="#dcdcdc" stroke="#444" stroke-width="1"/><path d="M2.5 6H6V10H10.5V13.5H2.5Z" fill="#5aaae6"/></g><g transform="translate(338,1007)"><path d="M1.5 1.5H12.5M1.5 1.5V13.5M1.5 13.5H7M12.5 1.5V7" stroke="#444" stroke-width="0.9" stroke-dasharray="2,1.3" fill="none"/><rect x="0.5" y="0.5" width="2" height="2" fill="#1e88e5"/><rect x="11.5" y="0.5" width="2" height="2" fill="#1e88e5"/><rect x="0.5" y="12.5" width="2" height="2" fill="#1e88e5"/><path d="M8.5 15L14.5 9" stroke="#f0b030" stroke-width="2.6"/><path d="M13.5 8L15.8 10.3" stroke="#e04040" stroke-width="2"/></g><g transform="translate(362,1007)"><polygon points="0,12.5 10,12.5 13,10 13,13 10,15.5 0,15.5" fill="#bdbdbd"/><rect x="0" y="3.3" width="10" height="9.2" fill="#64aee8"/><polygon points="0,3.3 3,0 13,0 10,3.3" fill="#8fcaf5"/><polygon points="10,3.3 13,0 13,10 10,12.5" fill="#4a94d4"/><path d="M15.5 13V1.5" stroke="#222" stroke-width="1.1"/><path d="M14 2.5L15.5 0L17 2.5Z" fill="#222"/></g><g transform="translate(386,1007)"><path d="M1.5 1.5H12.5M1.5 1.5V13.5M1.5 13.5H7M12.5 1.5V7" stroke="#444" stroke-width="0.9" stroke-dasharray="2,1.3" fill="none"/><rect x="0.5" y="0.5" width="2" height="2" fill="#1e88e5"/><rect x="11.5" y="0.5" width="2" height="2" fill="#1e88e5"/><rect x="0.5" y="12.5" width="2" height="2" fill="#1e88e5"/><path d="M8.5 15L14.5 9" stroke="#f0b030" stroke-width="2.6"/><path d="M13.5 8L15.8 10.3" stroke="#e04040" stroke-width="2"/></g><g transform="translate(410,1007)"><polygon points="0,12.5 10,12.5 13,10 13,13 10,15.5 0,15.5" fill="#bdbdbd"/><rect x="0" y="3.3" width="10" height="9.2" fill="#64aee8"/><polygon points="0,3.3 3,0 13,0 10,3.3" fill="#8fcaf5"/><polygon points="10,3.3 13,0 13,10 10,12.5" fill="#4a94d4"/><path d="M15.5 13V1.5" stroke="#222" stroke-width="1.1"/><path d="M14 2.5L15.5 0L17 2.5Z" fill="#222"/></g><g transform="translate(434,1007)"><path d="M1.5 1.5H12.5M1.5 1.5V13.5M1.5 13.5H7M12.5 1.5V7" stroke="#444" stroke-width="0.9" stroke-dasharray="2,1.3" fill="none"/><rect x="0.5" y="0.5" width="2" height="2" fill="#1e88e5"/><rect x="11.5" y="0.5" width="2" height="2" fill="#1e88e5"/><rect x="0.5" y="12.5" width="2" height="2" fill="#1e88e5"/><path d="M8.5 15L14.5 9" stroke="#f0b030" stroke-width="2.6"/><path d="M13.5 8L15.8 10.3" stroke="#e04040" stroke-width="2"/></g><g transform="translate(458,1007)"><polygon points="0,12.5 10,12.5 13,10 13,13 10,15.5 0,15.5" fill="#bdbdbd"/><rect x="0" y="3.3" width="10" height="9.2" fill="#64aee8"/><polygon points="0,3.3 3,0 13,0 10,3.3" fill="#8fcaf5"/><polygon points="10,3.3 13,0 13,10 10,12.5" fill="#4a94d4"/><path d="M15.5 13V1.5" stroke="#222" stroke-width="1.1"/><path d="M14 2.5L15.5 0L17 2.5Z" fill="#222"/></g><g transform="translate(482,1007)"><polygon points="0,12.5 10,12.5 13,10 13,13 10,15.5 0,15.5" fill="#bdbdbd"/><rect x="0" y="3.3" width="10" height="9.2" fill="#64aee8"/><polygon points="0,3.3 3,0 13,0 10,3.3" fill="#8fcaf5"/><polygon points="10,3.3 13,0 13,10 10,12.5" fill="#4a94d4"/><path d="M15.5 13V1.5" stroke="#222" stroke-width="1.1"/><path d="M14 2.5L15.5 0L17 2.5Z" fill="#222"/></g><g transform="translate(506,1007)"><path d="M0.5 15V8L5 3H10Q15 4 15 9V15Z" fill="#dcdcdc" stroke="#444" stroke-width="0.9"/><path d="M1 7.5L8 1.5L10.5 4.5L3.5 10.5Z" fill="#5aaae6"/></g><g transform="translate(530,1007)"><path d="M0.5 15V8L5 3H10Q15 4 15 9V15Z" fill="#dcdcdc" stroke="#444" stroke-width="0.9"/><path d="M1 7.5L8 1.5L10.5 4.5L3.5 10.5Z" fill="#5aaae6"/></g><path d="M544.2 1001.3H556.3V1005L551.2 1010V1032.8H549.2V1010L544.2 1005Z" fill="#555"/></svg>
<svg class="a" style="left:1890px;top:1007px" width="18" height="18"><g transform="translate(9,9)"><circle r="5.8" fill="#9a9a9a"/><rect x="-1.8" y="-8.5" width="3.6" height="4" fill="#9a9a9a" transform="rotate(0)"/><rect x="-1.8" y="-8.5" width="3.6" height="4" fill="#9a9a9a" transform="rotate(45)"/><rect x="-1.8" y="-8.5" width="3.6" height="4" fill="#9a9a9a" transform="rotate(90)"/><rect x="-1.8" y="-8.5" width="3.6" height="4" fill="#9a9a9a" transform="rotate(135)"/><rect x="-1.8" y="-8.5" width="3.6" height="4" fill="#9a9a9a" transform="rotate(180)"/><rect x="-1.8" y="-8.5" width="3.6" height="4" fill="#9a9a9a" transform="rotate(225)"/><rect x="-1.8" y="-8.5" width="3.6" height="4" fill="#9a9a9a" transform="rotate(270)"/><rect x="-1.8" y="-8.5" width="3.6" height="4" fill="#9a9a9a" transform="rotate(315)"/><circle r="2.5" fill="#f0f0f0"/></g></svg>

<!-- taskbar -->
<div class="a" style="left:0;top:1040px;width:1920px;height:40px;background:linear-gradient(90deg,#1d2f3b 0%,#1d2e40 50%,#1b2a47 100%)"></div>
<div class="a" style="left:0;top:1040px;width:48px;height:40px;background:#1f313c"></div>
<svg class="a" style="left:15px;top:1051px" width="18" height="17"><path d="M0 2.2L7.3 1.2V8H0Z M8.3 1.1L17.5 0V8H8.3Z M0 9H7.3V15.8L0 14.8Z M8.3 9H17.5V17L8.3 15.9Z" fill="#fff"/></svg>
<div class="a" style="left:48px;top:1040px;width:344px;height:40px;background:#f0f0f0;border-top:1px solid #d0d0d0"></div>
<svg class="a" style="left:59px;top:1051px" width="18" height="18"><circle cx="11" cy="6.8" r="5.5" fill="none" stroke="#222" stroke-width="1.3"/><path d="M7 10.8L1 16.8" stroke="#222" stroke-width="1.5"/></svg>
<div class="t" style="left:88.3px;top:1053px;font-size:13.5px;color:#333;transform:scaleX(0.887);transform-origin:0 0">ここに入力して検索</div>
<svg class="a" style="left:407px;top:1052px" width="17" height="17"><circle cx="8.5" cy="8.5" r="7" fill="none" stroke="#fff" stroke-width="1.6"/></svg>
<svg class="a" style="left:455px;top:1051px" width="18" height="18"><path d="M1 4H12V14H1Z" fill="none" stroke="#fff" stroke-width="1.3"/><path d="M1 1.5H12M1 16.5H12" stroke="#fff" stroke-width="1.2"/><rect x="13.8" y="1" width="1.6" height="3.5" fill="#fff"/><rect x="13" y="6" width="3" height="3" fill="#fff"/><rect x="13.8" y="10.5" width="1.6" height="6" fill="#fff"/></svg>
<svg class="a" style="left:504px;top:1050px" width="22" height="20"><path d="M0 2H8L10 4H21V18H0Z" fill="#f5c34d"/><path d="M0 6H21V18H0Z" fill="#fcd873"/><path d="M5 11H16V18H13V14H8V18H5Z" fill="#3b8ee8"/></svg>
<svg class="a" style="left:552px;top:1048px" width="23" height="23"><circle cx="11.5" cy="11.5" r="11" fill="#db4437"/><path d="M11.5 11.5L22 8.5A11 11 0 0 1 6 21Z" fill="#f4c20d"/><path d="M11.5 11.5L6 21A11 11 0 0 1 1.5 6.5Z" fill="#0f9d58"/><circle cx="11.5" cy="11.5" r="5" fill="#fff"/><circle cx="11.5" cy="11.5" r="4" fill="#4285f4"/></svg>
<div class="a" style="left:544px;top:1078px;width:40px;height:2px;background:#76b9ed"></div>
<div class="a" style="left:601px;top:1048px;width:24px;height:23px;background:linear-gradient(90deg,#d00 0,#d00 8%,#1a1ad0 30%,#000 90%);border:1px solid #ccc"></div>
<div class="t" style="left:602px;top:1053px;font-size:13px;color:#fff;font-family:'Liberation Serif',serif">ViX</div>
<svg class="a" style="left:648px;top:1048px" width="26" height="22"><path d="M2 14L14 4L19 9L7 19Z" fill="#2e6fd6" stroke="#a9c8f5" stroke-width="1.2"/><path d="M7 13L13 8" stroke="#fff" stroke-width="1.5"/><path d="M17 5L21 1" stroke="#7fb0ee" stroke-width="1.2"/></svg>
<div class="a" style="left:687px;top:1040px;width:48px;height:38px;background:#3e4f5b"></div>
<div class="a" style="left:687px;top:1078px;width:48px;height:2px;background:#76b9ed"></div>
<svg class="a" style="left:699px;top:1048px" width="24" height="24"><rect width="24" height="24" fill="#f7dcc4"/><path d="M7 4H17V8H11V10.5H16V14H11V19H7Z" fill="#e08a2c"/><text x="14" y="22" font-size="4" fill="#e08a2c" font-family="Liberation Sans">360</text></svg>
<svg class="a" style="left:748px;top:1049px" width="22" height="22"><circle cx="11" cy="11" r="10.8" fill="#e6b632"/><path d="M11 5V14.5" stroke="#fff" stroke-width="1.5"/><ellipse cx="9.3" cy="15" rx="2.4" ry="2" fill="#fff"/><path d="M11 5Q14 6 14 9" stroke="#fff" stroke-width="1.3" fill="none"/></svg>
<div class="a" style="left:740px;top:1078px;width:40px;height:2px;background:#76b9ed"></div>
<svg class="a" style="left:799px;top:1050px" width="20" height="20"><g transform="translate(10,10)"><circle r="6.5" fill="#fff"/><rect x="-2" y="-9.5" width="4" height="4.5" fill="#fff" transform="rotate(0)"/><rect x="-2" y="-9.5" width="4" height="4.5" fill="#fff" transform="rotate(45)"/><rect x="-2" y="-9.5" width="4" height="4.5" fill="#fff" transform="rotate(90)"/><rect x="-2" y="-9.5" width="4" height="4.5" fill="#fff" transform="rotate(135)"/><rect x="-2" y="-9.5" width="4" height="4.5" fill="#fff" transform="rotate(180)"/><rect x="-2" y="-9.5" width="4" height="4.5" fill="#fff" transform="rotate(225)"/><rect x="-2" y="-9.5" width="4" height="4.5" fill="#fff" transform="rotate(270)"/><rect x="-2" y="-9.5" width="4" height="4.5" fill="#fff" transform="rotate(315)"/><circle r="3.2" fill="#1f313c"/></g></svg>
<div class="a" style="left:789px;top:1078px;width:40px;height:2px;background:#76b9ed"></div>
<svg class="a" style="left:845px;top:1048px" width="24" height="24"><path d="M2 12Q2 5 11 5Q21 6 21 13Q20 19 12 20Q9 20 9 17Q9 15 6 16Q2 17 2 12Z" fill="#cfe5f7"/><circle cx="6" cy="12" r="1.6" fill="#e04040"/><circle cx="9" cy="8.5" r="1.6" fill="#5cc05c"/><circle cx="13" cy="7.5" r="1.6" fill="#f0c040"/><circle cx="11" cy="13" r="1.2" fill="#24323c"/><path d="M21 2L13 20" stroke="#e0963a" stroke-width="1.8"/></svg>
<div class="a" style="left:838px;top:1078px;width:40px;height:2px;background:#76b9ed"></div>
<svg class="a" style="left:1648px;top:1055px" width="14" height="9"><path d="M1 8L7 2L13 8" stroke="#fff" stroke-width="1.3" fill="none"/></svg>
<svg class="a" style="left:1671px;top:1053px" width="17" height="16"><rect x="4" y="1" width="12" height="9" fill="none" stroke="#fff" stroke-width="1.1"/><path d="M10 10V13M6 14H14M1 1V15M1 3H4" stroke="#fff" stroke-width="1.1"/><rect x="0" y="1" width="4" height="3" fill="#1c2b45" stroke="#fff" stroke-width="0.8"/></svg>
<svg class="a" style="left:1694px;top:1054px" width="18" height="12"><path d="M3 11Q0 11 0 8Q0 5.5 3 5.5Q4 1 9 1.5Q13 2 13.5 5Q17.5 5 17.5 8.5Q17.5 11 15 11Z" fill="#d8dce4"/><path d="M3 11Q0 11 0 8Q0 5.5 3 5.5H13.5Q17.5 5 17.5 8.5Q17.5 11 15 11Z" fill="#f0f2f5"/></svg>
<svg class="a" style="left:1719px;top:1052px" width="17" height="17"><path d="M1 6H4.5L9 2V15L4.5 11H1Z" fill="none" stroke="#fff" stroke-width="1.1"/><path d="M11 6.5Q12.5 8.5 11 10.5M13 4.5Q15.5 8.5 13 12.5M15 2.5Q18.5 8.5 15 14.5" stroke="#fff" stroke-width="0.9" fill="none"/></svg>
<svg class="a" style="left:1743px;top:1053px" width="15" height="15"><circle cx="7.5" cy="7.5" r="7" fill="#a0a4ab"/><path d="M4.5 4.5L10.5 10.5M10.5 4.5L4.5 10.5" stroke="#2a2d33" stroke-width="1.7"/></svg>
<svg class="a" style="left:1771px;top:1053px" width="16" height="15"><rect width="16" height="15" fill="#fff"/><circle cx="8" cy="7.5" r="6" fill="#1a1a1a"/><path d="M9 3.5V9Q9 12 6 11.5" stroke="#fff" stroke-width="1.2" fill="none"/></svg>
<div class="t" style="left:1821.0px;top:1045px;font-size:11.5px;color:#fff;transform:scaleX(0.938);transform-origin:0 0">5:54</div>
<div class="t" style="left:1803.0px;top:1063px;font-size:11.5px;color:#fff;transform:scaleX(1.008);transform-origin:0 0">2020/08/15</div>
<svg class="a" style="left:1878px;top:1051px" width="24" height="26"><path d="M1 1H17V12H7L3.5 15.5V12H1Z" fill="#fff"/><path d="M4 4H14M4 6.5H14M4 9H11" stroke="#1c2b45" stroke-width="1"/><circle cx="16" cy="16.5" r="6.8" fill="#2b2f36" stroke="#9aa0a8" stroke-width="0.9"/><text x="16" y="20.5" text-anchor="middle" font-size="10" font-weight="bold" fill="#fff" font-family="Liberation Sans">1</text></svg>
<div class="a" style="left:1915px;top:1040px;width:1px;height:40px;background:#5a6478"></div>
</body>
</html>
